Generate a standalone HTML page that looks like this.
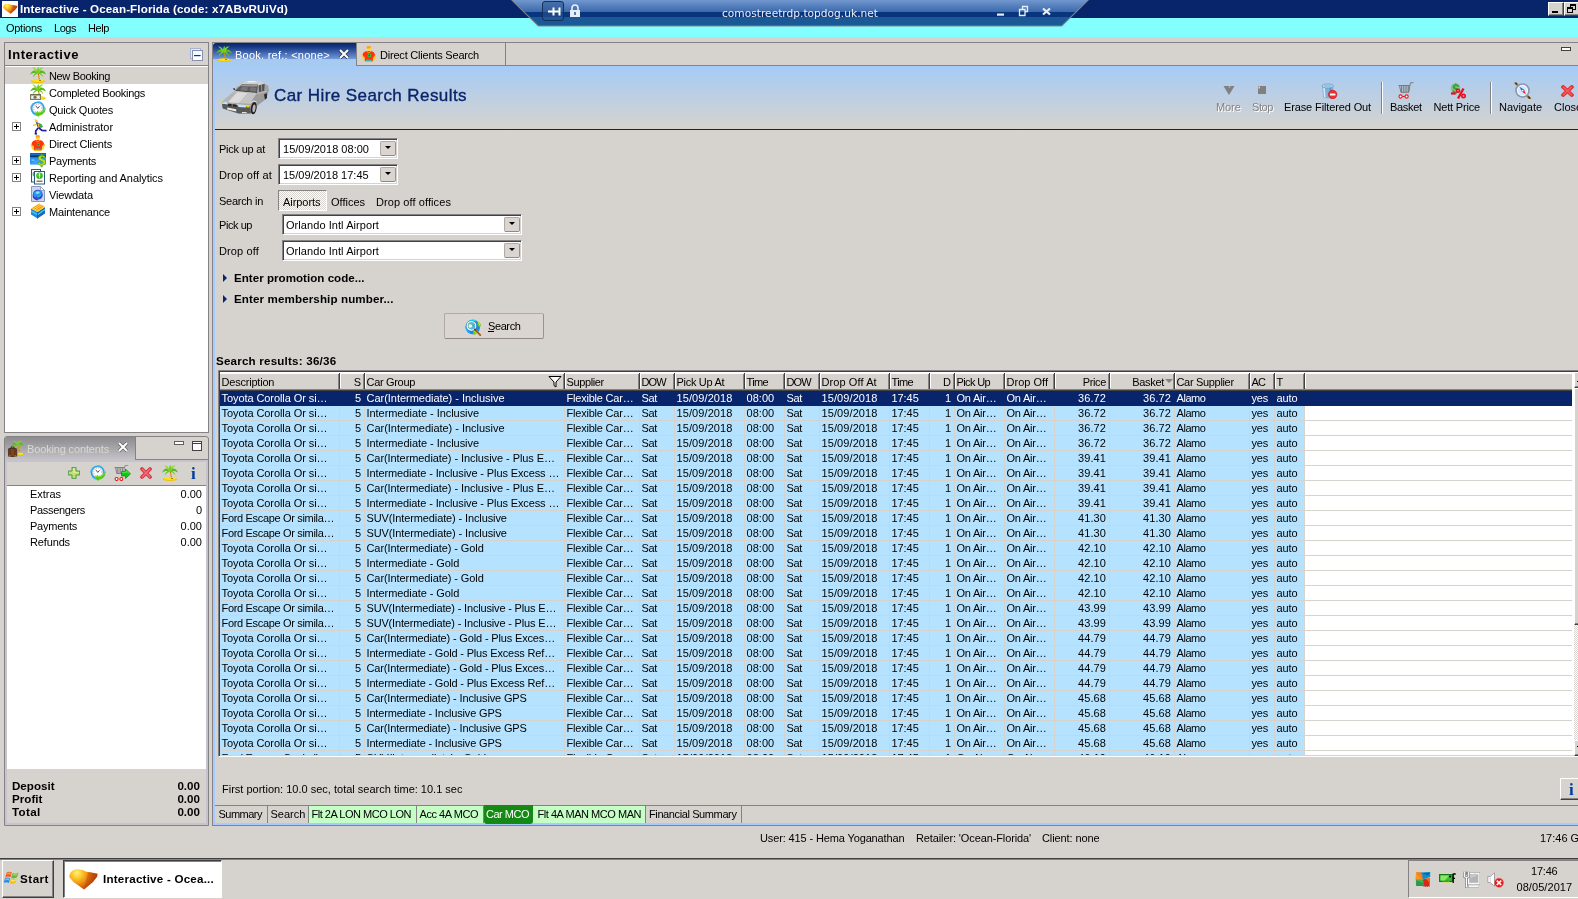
<!DOCTYPE html><html><head><meta charset="utf-8"><title>Interactive - Ocean-Florida</title><style>
html,body{margin:0;padding:0}
body{width:1578px;height:899px;overflow:hidden;background:#d6d3ce;position:relative;font:11px/13px "Liberation Sans",sans-serif;color:#000}
div,span.t,.ic{position:absolute;box-sizing:border-box}
span.t{white-space:nowrap;line-height:13px;height:13px}
.b{font-weight:bold;font-size:11.6px;margin-top:-1px}
.flat{background:#dad5d0;border:1px solid;border-color:#b0aaa2 #9a948c #908a82 #b0aaa2;border-radius:2px}
.w{color:#fff}
.sunk{border:1px solid;border-color:#848284 #fff #fff #848284;box-shadow:inset 1px 1px 0 #424142,inset -1px -1px 0 #d6d3ce;background:#fff}
.rais{border:1px solid;border-color:#fff #424142 #424142 #fff;box-shadow:inset -1px -1px 0 #848284;background:#d6d3ce}
.rais2{border:1px solid;border-color:#fff #424142 #424142 #fff;box-shadow:inset -1px -1px 0 #848284;background:#d6d3ce}
.ic svg{display:block}
.hd{background:#d6d3ce;border-right:1px solid #424142;height:19px;top:372px}
</style></head><body><div id="root" style="left:0;top:0;width:1578px;height:899px;will-change:transform">
<div class="" style="left:0px;top:0px;width:1578px;height:18px;background:#08246b"></div>
<div class="ic" style="left:2px;top:1px"><svg width="16" height="16" viewBox="0 0 16 16"><rect width="16" height="16" fill="#fff"/><g transform="translate(1,2.500) scale(.5)"><defs><radialGradient id="ga" gradientUnits="userSpaceOnUse" cx="8" cy="4" r="20"><stop offset="0" stop-color="#fff080"/><stop offset=".22" stop-color="#ffd030"/><stop offset=".5" stop-color="#f09818"/><stop offset=".78" stop-color="#d05c0c"/><stop offset="1" stop-color="#b84008"/></radialGradient></defs><path d="M.3 8C.5 4 3 .5 8 .3c4-.1 7 1.200 9 2.500l3.500.3 8 1.700-.3 2.700L24 13l-9 7.500L4.500 13z" fill="url(#ga)"/><path d="M19 3.500l9.500 1.300-.3 2.700L24 13l-9 7.500z" fill="#b03c04" fill-opacity=".35"/></g></svg></div>
<span class="t b w" style="top:3px;left:20px;letter-spacing:0.126px;">Interactive - Ocean-Florida (code: x7ABvRUiVd)</span>
<div class="rais2" style="left:1548px;top:2px;width:16px;height:14px;"><div style="left:3px;top:8px;width:6px;height:2px;background:#000"></div></div>
<div class="rais2" style="left:1564px;top:2px;width:16px;height:14px;"><div style="left:5px;top:1px;width:6px;height:6px;border:1px solid #000;border-top-width:2px"></div><div style="left:2px;top:4px;width:6px;height:6px;border:1px solid #000;border-top-width:2px;background:#d6d3ce"></div></div>
<div class="" style="left:0px;top:18px;width:1578px;height:19px;background:#84ffff"></div>
<span class="t " style="top:22px;left:6px;letter-spacing:-0.275px;">Options</span>
<span class="t " style="top:22px;left:54px;letter-spacing:-0.465px;">Logs</span>
<span class="t " style="top:22px;left:88px;letter-spacing:-0.406px;">Help</span>
<svg style="position:absolute;left:505px;top:0" width="590" height="28" viewBox="505 0 590 28">
<defs><linearGradient id="rg" x1="0" y1="0" x2="0" y2="1">
<stop offset="0" stop-color="#7297cf"/><stop offset="0.465" stop-color="#3a69aa"/><stop offset="0.475" stop-color="#08357e"/><stop offset="0.655" stop-color="#08357e"/><stop offset="0.67" stop-color="#1b5896"/><stop offset="1" stop-color="#1b5896"/></linearGradient></defs>
<polygon points="511,0 1089,0 1062,26.5 538,26.5" fill="#7d8790"/>
<polygon points="512.5,0 1087.5,0 1061.5,25.5 538.5,25.5" fill="url(#rg)"/>
<rect x="542.5" y="1.5" width="21" height="19" rx="2.5" fill="#2c5690" fill-opacity=".55" stroke="#14305c"/>
<path d="M548 11.5h5M553.5 7.5v8M559.5 7.5v8M553.5 11.5h6" stroke="#fff" stroke-width="2" fill="none"/>
<rect x="570" y="10" width="10" height="7" fill="#e8eef8"/><path d="M572 10v-2a3 3 0 0 1 6 0v2" stroke="#e8eef8" stroke-width="1.6" fill="none"/><rect x="574.3" y="12" width="1.4" height="3" fill="#1a4a8a"/>
<rect x="997" y="13.5" width="7" height="2.2" fill="#e8eef8"/>
<path d="M1022.5 9.5v-3h5v5h-2.5M1019.5 9.5h5.5v6h-5.5z" stroke="#e8eef8" stroke-width="1.3" fill="none"/>
<path d="M1043 8.5l7 6M1050 8.5l-7 6" stroke="#e8eef8" stroke-width="2.2" fill="none"/>
<text x="722" y="17" font-family="'DejaVu Sans','Liberation Sans',sans-serif" font-size="11" fill="#e8eef8" textLength="156" lengthAdjust="spacingAndGlyphs">comostreetrdp.topdog.uk.net</text>
</svg>
<div class="" style="left:4px;top:42px;width:205px;height:391px;border:1px solid #848284;background:#fff"></div>
<div class="" style="left:5px;top:43px;width:203px;height:22px;background:#d6d3ce"></div>
<div class="" style="left:5px;top:65px;width:203px;height:1px;background:#848284"></div>
<span class="t b" style="top:49px;left:8px;letter-spacing:0.541px;font-size:13px;line-height:15px;height:15px;margin-top:-2px">Interactive</span>
<div class="ic" style="left:190px;top:48px"><svg width="14" height="14" viewBox="0 0 14 14"><rect x=".5" y=".5" width="10" height="10" fill="#d8f0ff" stroke="#a8b4d4"/><rect x="2.500" y="2.500" width="10" height="10" fill="#f0fbff" stroke="#8890b0"/><rect x="3.500" y="8" width="8" height="4" fill="#fff"/><rect x="4" y="7" width="6.600" height="1.200" fill="#004080"/></svg></div>
<div class="" style="left:5px;top:67px;width:203px;height:17px;background:#d6d3ce"></div>
<div class="ic" style="left:30px;top:67px"><svg width="16" height="16" viewBox="0 0 16 16"><ellipse cx="8" cy="14.300" rx="7" ry="1.700" fill="#f0c000"/><ellipse cx="8" cy="13.700" rx="6" ry="1.300" fill="#ffe414"/><path d="M7 5.500C8.300 8 9 10.500 8.800 13.600L10 13.800 9.700 13c.2-2.800-.5-5.500-1.500-7.800z" fill="#f5b400"/><path d="M7.800 7l1 .8M8.300 9l1 .6M8.600 11l1 .5M9.200 13.500l1.800.2" stroke="#b05a14" stroke-width=".9"/><path d="M7.500 5C5.500 2.300 1.800 3 0 7.800 1.800 6.200 4.200 5.600 7.200 6.300z" fill="#58b81c"/><path d="M7.300 5.400C5.200 5.400 3 7.400 2.800 10.600 4 8.600 5.800 7.200 8 6.800z" fill="#6cc822"/><path d="M8 5C10.200 2.200 14.500 3 16 7.600 14 6 11.500 5.500 8.300 6.200z" fill="#58b81c"/><path d="M8.300 5.400C10.800 5.400 13 7.400 13.400 10.600 12.200 8.600 10.500 7.300 8 6.800z" fill="#6cc822"/><path d="M7.600 5.200C6.800 2.600 4.800.6 2 .6 4 1.800 5.300 3.300 5.800 5.400z" fill="#86d82c"/><path d="M7.800 5.200C8.400 2.400 10.600.2 13.600.6 11.400 1.800 10 3.400 9.500 5.400z" fill="#86d82c"/><path d="M6.500 5.200C7 2.500 7.500 1 8.500 0 9 1.500 9.200 3.500 8.800 5.400z" fill="#72cc24"/></svg></div>
<span class="t " style="top:70px;left:49px;letter-spacing:-0.348px;">New Booking</span>
<div class="ic" style="left:30px;top:84px"><svg width="16" height="16" viewBox="0 0 16 16"><ellipse cx="11.500" cy="14" rx="4.200" ry="1.600" fill="#f0c000"/><ellipse cx="11.500" cy="13.500" rx="3.500" ry="1.100" fill="#ffe414"/><path d="M7 5.500C8.300 8 9 10.500 8.800 11.500L10 11.500 9.700 11c.2-2.800-.5-5.500-1.500-7.800z" fill="#f5b400"/><path d="M7.800 7l1 .8M8.300 9l1 .6M8.600 11l1 .5M9.200 13.500l1.800.2" stroke="#b05a14" stroke-width=".9"/><path d="M7.500 5C5.500 2.300 1.800 3 0 7.800 1.800 6.200 4.200 5.600 7.200 6.300z" fill="#58b81c"/><path d="M7.300 5.400C5.200 5.400 3 7.400 2.800 10.600 4 8.600 5.800 7.200 8 6.800z" fill="#6cc822"/><path d="M8 5C10.200 2.200 14.500 3 16 7.600 14 6 11.500 5.500 8.300 6.200z" fill="#58b81c"/><path d="M8.300 5.400C10.800 5.400 13 7.400 13.400 10.600 12.200 8.600 10.500 7.300 8 6.800z" fill="#6cc822"/><path d="M7.600 5.200C6.800 2.600 4.800.6 2 .6 4 1.800 5.300 3.300 5.800 5.400z" fill="#86d82c"/><path d="M7.800 5.200C8.400 2.400 10.600.2 13.600.6 11.400 1.800 10 3.400 9.500 5.400z" fill="#86d82c"/><path d="M6.500 5.200C7 2.500 7.500 1 8.500 0 9 1.500 9.200 3.500 8.800 5.400z" fill="#72cc24"/><rect x=".5" y="10.500" width="10" height="5" fill="#d8dcc4" stroke="#787c5c" stroke-width="1"/><rect x="1" y="10.200" width="10" height="1.200" fill="#686c50"/><circle cx="5" cy="13.200" r="1.500" fill="#70705c"/><rect x="1.800" y="12.300" width="1.300" height="1.600" fill="#fff"/><rect x="7.200" y="12.300" width="1.600" height="1.600" fill="#fff"/></svg></div>
<span class="t " style="top:87px;left:49px;letter-spacing:-0.306px;">Completed Bookings</span>
<div class="ic" style="left:30px;top:101px"><svg width="16" height="16" viewBox="0 0 16 16"><circle cx="7.700" cy="7.500" r="7" fill="#18a0f8"/><circle cx="7.700" cy="7.500" r="7" fill="none" stroke="#38c8ff" stroke-width="1" stroke-dasharray="6 5"/><circle cx="7.700" cy="7.300" r="5.200" fill="#fff"/><circle cx="7.700" cy="7.300" r="5.200" fill="none" stroke="#c8c0c0" stroke-width=".7"/><circle cx="7.700" cy="7.300" r="4" fill="none" stroke="#a09090" stroke-width=".9" stroke-dasharray=".7 1.390"/><path d="M5.800 4.800l2 2.600 1.800-2.200" stroke="#484040" stroke-width=".9" fill="none"/><path d="M4.800 12l3.200-2.200 0 1.400c3.500 0 6-1.600 7.400-5.200.8 4.200-2 8-6 8.600l-1.200 1.400z" fill="#58c81c"/><path d="M5 12.200l3-1.600v1c2.500 0 5-1 6.600-3.600" stroke="#8ce838" stroke-width=".8" fill="none"/></svg></div>
<span class="t " style="top:104px;left:49px;letter-spacing:-0.220px;">Quick Quotes</span>
<div class="ic" style="left:32px;top:119px"><svg width="16" height="16" viewBox="0 0 16 16"><path d="M2.500 0l2.200.8 1.400 1.600-1 1.400-1.800-.6z" fill="#f8c838"/><path d="M4 3l3 1 2 3.800-2.600 1.600L4.600 6z" fill="#3848a8"/><path d="M6.500 4l3 1 1 3-2 1.400z" fill="#48a848"/><path d="M6 4.500l1.200 4" stroke="#f0c030" stroke-width="1.200"/><path d="M4.500 5.500L1 6.300" stroke="#f8c838" stroke-width="1.300"/><path d="M9 6l1.600 1.800" stroke="#48a848" stroke-width="1.200"/><path d="M6.800 8.800l3.200 2.600 4.500.2" stroke="#1c1c9c" stroke-width="1.700" fill="none"/><path d="M6.200 9l-2.400 2.800-.2 3" stroke="#1c1c9c" stroke-width="1.700" fill="none"/><rect x="2.800" y="14" width="2.200" height="1.600" fill="#1c1c9c"/></svg></div>
<span class="t " style="top:121px;left:49px;letter-spacing:-0.061px;">Administrator</span>
<div class="" style="left:12px;top:122px;width:9px;height:9px;border:1px solid #848284;background:#fff"><div style="left:1px;top:3px;width:5px;height:1px;background:#000"></div><div style="left:3px;top:1px;width:1px;height:5px;background:#000"></div></div>
<div class="ic" style="left:30px;top:135px"><svg width="16" height="17" viewBox="0 0 16 17"><path d="M5.500 1.200c.8-1.400 3.600-1.400 4.600-.2l-.6 1.200h-3.400z" fill="#f8a818"/><ellipse cx="7.800" cy="3" rx="2.300" ry="2.100" fill="#ffd838"/><path d="M6 1.800h3.600" stroke="#f09010" stroke-width=".9"/><path d="M2 7.500C3 5.500 5 5 7.800 5s4.800.5 5.800 2.500l1 3-1.800 1.200-.6-1.400-.4 5H3.800l-.4-5-.6 1.400L1 10.500z" fill="#ff3408"/><path d="M5.500 5.200l2.300 1.600 2.300-1.600" stroke="#ffb020" stroke-width=".9" fill="none"/><rect x="6.800" y="8" width="3" height="3" fill="#38c048"/><rect x="7.600" y="8.800" width="1.400" height="1.400" fill="#187828"/><path d="M1.400 10l1.600 3.600M14.200 10l-1.600 3.600" stroke="#ffd020" stroke-width="1.700" stroke-linecap="round"/><rect x="5" y="13.500" width="5.600" height="1.700" fill="#20b8c8"/><path d="M4.200 15.500h7.200" stroke="#f8b020" stroke-width="1.200"/></svg></div>
<span class="t " style="top:138px;left:49px;letter-spacing:-0.172px;">Direct Clients</span>
<div class="ic" style="left:30px;top:153px"><svg width="16" height="17" viewBox="0 0 16 17"><rect x="0" y="0" width="16" height="11.500" rx="1" fill="#2890f0"/><rect x="0" y="0" width="16" height="1.600" fill="#1060b0"/><rect x="0" y="2.200" width="16" height="2" fill="#083868"/><path d="M0 11l10-6.500h6v7H0z" fill="#48b0ff" fill-opacity=".55"/><rect x="1.500" y="6.500" width="3" height="1.200" fill="#88d0ff"/><path d="M11.500 2.300c2.500-.3 3.800.7 4 2.200l-1.800.4c-.3-.8-1-1.200-2-1-1 .3-1 1.200 0 1.600 2 .8 4.200 1.200 4 3.800-.2 1.800-1.600 2.800-3.400 3v1.600h-1.300v-1.600c-2-.2-3.200-1.200-3.500-3l1.800-.3c.3 1 1 1.600 2.300 1.500 1.300-.1 1.800-1.200.8-1.900-1.800-1-4.200-1-4.200-3.500 0-1.500 1.200-2.500 2.800-2.800V1h1.300v1.300z" fill="#b8e020" stroke="#389010" stroke-width=".6"/></svg></div>
<span class="t " style="top:155px;left:49px;letter-spacing:-0.240px;">Payments</span>
<div class="" style="left:12px;top:156px;width:9px;height:9px;border:1px solid #848284;background:#fff"><div style="left:1px;top:3px;width:5px;height:1px;background:#000"></div><div style="left:3px;top:1px;width:1px;height:5px;background:#000"></div></div>
<div class="ic" style="left:30px;top:169px"><svg width="16" height="16" viewBox="0 0 16 16"><rect x="1.500" y=".5" width="9" height="12.500" fill="#f4f8fc" stroke="#2a5a7a"/><circle cx="5" cy="5" r="2.500" fill="#48c038"/><rect x="4.500" y="2.500" width="10" height="12.500" fill="#fff" stroke="#2a5a7a"/><circle cx="9.500" cy="6.800" r="3.300" fill="#30b820"/><circle cx="9" cy="6" r="2" fill="#68e048" fill-opacity=".6"/><rect x="9" y="4.400" width="1.100" height="3.200" fill="#fff"/><rect x="9" y="8.200" width="1.100" height="1" fill="#fff"/><path d="M6.500 12.200h6" stroke="#803828" stroke-width="1.100"/></svg></div>
<span class="t " style="top:172px;left:49px;letter-spacing:-0.069px;">Reporting and Analytics</span>
<div class="" style="left:12px;top:173px;width:9px;height:9px;border:1px solid #848284;background:#fff"><div style="left:1px;top:3px;width:5px;height:1px;background:#000"></div><div style="left:3px;top:1px;width:1px;height:5px;background:#000"></div></div>
<div class="ic" style="left:30px;top:186px"><svg width="16" height="16" viewBox="0 0 16 16"><path d="M1.500.5h9l4 4v11h-13z" fill="#ccd6ec" stroke="#8898b8"/><path d="M10.500.5v4h4z" fill="#fff" stroke="#8898b8" stroke-width=".8"/><circle cx="7.800" cy="8.800" r="5" fill="#3848d8"/><path d="M4 6.500c1.500-2 5-2.800 7-1 1.500 1.500 1 3.500-.5 4.500S7.500 9 6.500 10.500s-3 .5-3-1.500.0-1.800.5-2.500z" fill="#2098f0"/><path d="M6 6c1-1 3-1 3.500 0s-.5 2-2 2-2.500-1-1.500-2z" fill="#88e0ff"/><path d="M7 11c1.500-.5 3-.5 4-2" stroke="#30d0c0" stroke-width="1" fill="none"/><path d="M3.200 9.500c0 2.500 2 4.300 4.600 4.300" stroke="#5828a8" stroke-width="1.200" fill="none"/></svg></div>
<span class="t " style="top:189px;left:49px;letter-spacing:-0.133px;">Viewdata</span>
<div class="ic" style="left:30px;top:203px"><svg width="16" height="16" viewBox="0 0 16 16"><path d="M1 5.500l6.500 3.500v6.500L1 11.500z" fill="#2088e0"/><path d="M7.500 9L15 4v6.500l-7.500 5z" fill="#1868b8"/><path d="M1 5.500L8.500.8 15 4 7.500 9z" fill="#ffc818"/><path d="M2.800 5.200l7-4.200M4.500 6.100l7-4.300M6.200 7l7-4.400" stroke="#f08010" stroke-width=".9"/><path d="M2 4.900l7-4.300M3.600 5.700l7-4.300M5.300 6.600l7-4.400" stroke="#fff0a0" stroke-width=".5"/><path d="M1 8l6.500 3.500L15 6.500" stroke="#48d0f8" stroke-width="1.100" fill="none"/><path d="M7.500 9v6.500" stroke="#0c4890" stroke-width=".7"/></svg></div>
<span class="t " style="top:206px;left:49px;letter-spacing:-0.182px;">Maintenance</span>
<div class="" style="left:12px;top:207px;width:9px;height:9px;border:1px solid #848284;background:#fff"><div style="left:1px;top:3px;width:5px;height:1px;background:#000"></div><div style="left:3px;top:1px;width:1px;height:5px;background:#000"></div></div>
<div class="" style="left:4px;top:436px;width:205px;height:390px;border:1px solid #848284;border-radius:3px 3px 0 0"></div>
<div class="" style="left:5px;top:437px;width:131px;height:23px;background:linear-gradient(#8c8c90,#a4a4a8 45%,#c6c4c8);border-right:1px solid #848284;border-radius:2px 0 0 0"></div>
<div class="" style="left:136px;top:459px;width:72px;height:1px;background:#848284"></div>
<div class="" style="left:5px;top:460px;width:203px;height:2px;background:#c6c3ce"></div>
<div class="" style="left:5px;top:460px;width:2px;height:365px;background:#c6c3ce"></div>
<div class="" style="left:206px;top:460px;width:2px;height:365px;background:#c6c3ce"></div>
<div class="" style="left:5px;top:823px;width:203px;height:2px;background:#c6c3ce"></div>
<div class="ic" style="left:8px;top:440px"><svg width="16" height="17" viewBox="0 0 16 17"><g transform="translate(3.500,0) scale(.78)"><path d="M7 5.500C8.300 8 9 10.500 8.800 13.600L10 13.800 9.700 13c.2-2.800-.5-5.500-1.500-7.800z" fill="#f5b400"/><path d="M7.800 7l1 .8M8.300 9l1 .6M8.600 11l1 .5M9.200 13.500l1.800.2" stroke="#b05a14" stroke-width=".9"/><path d="M7.500 5C5.500 2.300 1.800 3 0 7.800 1.800 6.200 4.200 5.600 7.200 6.300z" fill="#58b81c"/><path d="M7.300 5.400C5.200 5.400 3 7.400 2.800 10.600 4 8.600 5.800 7.200 8 6.800z" fill="#6cc822"/><path d="M8 5C10.200 2.200 14.500 3 16 7.600 14 6 11.500 5.500 8.300 6.200z" fill="#58b81c"/><path d="M8.300 5.400C10.800 5.400 13 7.400 13.400 10.600 12.200 8.600 10.500 7.300 8 6.800z" fill="#6cc822"/><path d="M7.600 5.200C6.800 2.600 4.800.6 2 .6 4 1.800 5.300 3.300 5.800 5.400z" fill="#86d82c"/><path d="M7.800 5.200C8.400 2.400 10.600.2 13.600.6 11.400 1.800 10 3.400 9.500 5.400z" fill="#86d82c"/><path d="M6.500 5.200C7 2.500 7.500 1 8.500 0 9 1.500 9.200 3.500 8.800 5.400z" fill="#72cc24"/></g><ellipse cx="12.500" cy="14.300" rx="3.400" ry="1.500" fill="#f0c000"/><ellipse cx="12.500" cy="13.800" rx="2.800" ry="1" fill="#ffe414"/><rect x=".3" y="8.500" width="8.400" height="8" rx="1" fill="#7a4424"/><rect x=".3" y="8.500" width="8.400" height="8" rx="1" fill="none" stroke="#3c1c08" stroke-width=".7"/><path d="M3 8.500V7h3v1.500" stroke="#3c1c08" stroke-width=".9" fill="none"/><path d="M2 9v7M7 9v7" stroke="#4c2810" stroke-width=".8"/><rect x="1.200" y="15.500" width="1.200" height="1" fill="#f0c000"/><rect x="6.600" y="15.500" width="1.200" height="1" fill="#f0c000"/></svg></div>
<span class="t " style="top:443px;left:27px;letter-spacing:-0.149px;color:#dcd8d2">Booking contents</span>
<svg style="position:absolute;left:117px;top:441px" width="12" height="12"><path d="M2 2l8 8M10 2l-8 8" stroke="#606060" stroke-width="3.4"/><path d="M2 2l8 8M10 2l-8 8" stroke="#fff" stroke-width="2"/></svg>
<div class="" style="left:174px;top:441px;width:10px;height:4px;border:1px solid #606060;background:#fff"></div>
<div class="" style="left:192px;top:441px;width:10px;height:10px;border:1px solid #424142;background:#fff"><div style="left:0;top:1px;width:8px;height:1px;background:#424142"></div></div>
<div class="" style="left:7px;top:485px;width:199px;height:1px;background:#848284"></div>
<div class="ic" style="left:68px;top:467px"><svg width="12" height="12" viewBox="0 0 12 12"><path d="M4 .3h4v3.700h3.700v4H8v3.700H4V8H.3V4H4z" fill="#c4dc70" stroke="#3c9048" stroke-width=".9"/><path d="M5 1.300h2v3.700h3.700v1H5z" fill="#e0f098" fill-opacity=".8"/></svg></div>
<div class="ic" style="left:90px;top:465px"><svg width="16" height="16" viewBox="0 0 16 16"><circle cx="7.700" cy="7.500" r="7" fill="#18a0f8"/><circle cx="7.700" cy="7.500" r="7" fill="none" stroke="#38c8ff" stroke-width="1" stroke-dasharray="6 5"/><circle cx="7.700" cy="7.300" r="5.200" fill="#fff"/><circle cx="7.700" cy="7.300" r="5.200" fill="none" stroke="#c8c0c0" stroke-width=".7"/><circle cx="7.700" cy="7.300" r="4" fill="none" stroke="#a09090" stroke-width=".9" stroke-dasharray=".7 1.390"/><path d="M5.800 4.800l2 2.600 1.800-2.200" stroke="#484040" stroke-width=".9" fill="none"/><path d="M4.800 12l3.200-2.200 0 1.400c3.500 0 6-1.600 7.400-5.200.8 4.200-2 8-6 8.600l-1.200 1.400z" fill="#58c81c"/><path d="M5 12.200l3-1.600v1c2.500 0 5-1 6.600-3.600" stroke="#8ce838" stroke-width=".8" fill="none"/></svg></div>
<div class="ic" style="left:114px;top:465px"><svg width="17" height="16" viewBox="0 0 17 16"><path d="M.5 2.500h10.500M1.500 2.500l1.300 6h7.200M3.300 2.500v6M5 2.500v6M6.700 2.500v6M8.400 2.500v6M10 2.500v6M10.500 2.500l.9-2.200h2.800" stroke="#7c7c80" stroke-width=".9" fill="none"/><circle cx="2.600" cy="14" r="1.500" fill="#fff" stroke="#e81818" stroke-width="1.100"/><circle cx="7.400" cy="14" r="1.500" fill="#fff" stroke="#e81818" stroke-width="1.100"/><path d="M7.500 6.500h4V4l5 4.800-5 4.700V11h-4z" fill="#10c818" stroke="#0c8010" stroke-width=".7"/><path d="M8.200 7.300h4.200V6l3 2.800" stroke="#68f060" stroke-width=".8" fill="none"/></svg></div>
<div class="ic" style="left:140px;top:467px"><svg width="12" height="12" viewBox="0 0 12 12"><path d="M2 2l8 8M10 2l-8 8" stroke="#d83040" stroke-width="3.700" stroke-linecap="round"/><path d="M2.200 2.200l7.600 7.600M9.800 2.200l-7.600 7.600" stroke="#f06874" stroke-width="1.700" stroke-linecap="round"/></svg></div>
<div class="ic" style="left:162px;top:465px"><svg width="16" height="16" viewBox="0 0 16 16"><ellipse cx="8" cy="14.300" rx="7" ry="1.700" fill="#f0c000"/><ellipse cx="8" cy="13.700" rx="6" ry="1.300" fill="#ffe414"/><path d="M7 5.500C8.300 8 9 10.500 8.800 13.600L10 13.800 9.700 13c.2-2.800-.5-5.500-1.500-7.800z" fill="#f5b400"/><path d="M7.800 7l1 .8M8.300 9l1 .6M8.600 11l1 .5M9.200 13.500l1.800.2" stroke="#b05a14" stroke-width=".9"/><path d="M7.500 5C5.500 2.300 1.800 3 0 7.800 1.800 6.200 4.200 5.600 7.200 6.300z" fill="#58b81c"/><path d="M7.300 5.400C5.200 5.400 3 7.400 2.800 10.600 4 8.600 5.800 7.200 8 6.800z" fill="#6cc822"/><path d="M8 5C10.200 2.200 14.500 3 16 7.600 14 6 11.500 5.500 8.300 6.200z" fill="#58b81c"/><path d="M8.300 5.400C10.800 5.400 13 7.400 13.400 10.600 12.200 8.600 10.500 7.300 8 6.800z" fill="#6cc822"/><path d="M7.600 5.200C6.800 2.600 4.800.6 2 .6 4 1.800 5.300 3.300 5.800 5.400z" fill="#86d82c"/><path d="M7.800 5.200C8.400 2.400 10.600.2 13.600.6 11.400 1.800 10 3.400 9.500 5.400z" fill="#86d82c"/><path d="M6.500 5.200C7 2.500 7.500 1 8.500 0 9 1.500 9.200 3.500 8.800 5.400z" fill="#72cc24"/></svg></div>
<span class="t " style="top:469px;left:191px;font:bold 17px/17px Liberation Serif,serif;height:17px;color:#003c9c;margin-top:-4px">i</span>
<div class="" style="left:7px;top:486px;width:199px;height:283px;background:#fff"></div>
<span class="t " style="top:488px;left:30px;letter-spacing:-0.031px;">Extras</span>
<span class="t " style="top:488px;left:-98px;width:300px;text-align:right;">0.00</span>
<span class="t " style="top:504px;left:30px;letter-spacing:-0.309px;">Passengers</span>
<span class="t " style="top:504px;left:-98px;width:300px;text-align:right;">0</span>
<span class="t " style="top:520px;left:30px;letter-spacing:-0.240px;">Payments</span>
<span class="t " style="top:520px;left:-98px;width:300px;text-align:right;">0.00</span>
<span class="t " style="top:536px;left:30px;letter-spacing:-0.141px;">Refunds</span>
<span class="t " style="top:536px;left:-98px;width:300px;text-align:right;">0.00</span>
<span class="t b" style="top:780px;left:12px;letter-spacing:-0.002px;">Deposit</span>
<span class="t b" style="top:780px;left:-100px;width:300px;text-align:right;">0.00</span>
<span class="t b" style="top:793px;left:12px;letter-spacing:0.036px;">Profit</span>
<span class="t b" style="top:793px;left:-100px;width:300px;text-align:right;">0.00</span>
<span class="t b" style="top:806px;left:12px;letter-spacing:0.331px;">Total</span>
<span class="t b" style="top:806px;left:-100px;width:300px;text-align:right;">0.00</span>
<div class="" style="left:212px;top:42px;width:1370px;height:784px;border:1px solid #848284;border-right:0"></div>
<div class="" style="left:213px;top:43px;width:144px;height:23px;background:linear-gradient(#08246b 0,#173a86 18%,#6f97d8 68%,#a6caf0 72%);border-right:1px solid #848284;border-radius:3px 0 0 0"></div>
<div class="ic" style="left:216px;top:46px"><svg width="16" height="16" viewBox="0 0 16 16"><ellipse cx="8" cy="14.300" rx="7" ry="1.700" fill="#f0c000"/><ellipse cx="8" cy="13.700" rx="6" ry="1.300" fill="#ffe414"/><path d="M7 5.500C8.300 8 9 10.500 8.800 13.600L10 13.800 9.700 13c.2-2.800-.5-5.500-1.500-7.800z" fill="#f5b400"/><path d="M7.800 7l1 .8M8.300 9l1 .6M8.600 11l1 .5M9.200 13.500l1.800.2" stroke="#b05a14" stroke-width=".9"/><path d="M7.500 5C5.500 2.300 1.800 3 0 7.800 1.800 6.200 4.200 5.600 7.200 6.300z" fill="#58b81c"/><path d="M7.300 5.400C5.200 5.400 3 7.400 2.800 10.600 4 8.600 5.800 7.200 8 6.800z" fill="#6cc822"/><path d="M8 5C10.200 2.200 14.500 3 16 7.600 14 6 11.500 5.500 8.300 6.200z" fill="#58b81c"/><path d="M8.300 5.400C10.800 5.400 13 7.400 13.400 10.600 12.200 8.600 10.500 7.300 8 6.800z" fill="#6cc822"/><path d="M7.600 5.200C6.800 2.600 4.800.6 2 .6 4 1.800 5.300 3.300 5.800 5.400z" fill="#86d82c"/><path d="M7.800 5.200C8.400 2.400 10.600.2 13.600.6 11.400 1.800 10 3.400 9.500 5.400z" fill="#86d82c"/><path d="M6.500 5.200C7 2.500 7.500 1 8.500 0 9 1.500 9.200 3.500 8.800 5.400z" fill="#72cc24"/></svg></div>
<span class="t w" style="top:49px;left:235px;letter-spacing:0.249px;">Book. ref.: &lt;none&gt;</span>
<svg style="position:absolute;left:338px;top:48px" width="12" height="12"><path d="M2 2l8 8M10 2l-8 8" stroke="#303840" stroke-width="3.6"/><path d="M2 2l8 8M10 2l-8 8" stroke="#fff" stroke-width="2"/></svg>
<div class="ic" style="left:361px;top:46px"><svg width="16" height="17" viewBox="0 0 16 17"><path d="M5.500 1.200c.8-1.400 3.600-1.400 4.600-.2l-.6 1.200h-3.400z" fill="#f8a818"/><ellipse cx="7.800" cy="3" rx="2.300" ry="2.100" fill="#ffd838"/><path d="M6 1.800h3.600" stroke="#f09010" stroke-width=".9"/><path d="M2 7.500C3 5.500 5 5 7.800 5s4.800.5 5.800 2.500l1 3-1.800 1.200-.6-1.400-.4 5H3.800l-.4-5-.6 1.400L1 10.500z" fill="#ff3408"/><path d="M5.500 5.200l2.300 1.600 2.300-1.600" stroke="#ffb020" stroke-width=".9" fill="none"/><rect x="6.800" y="8" width="3" height="3" fill="#38c048"/><rect x="7.600" y="8.800" width="1.400" height="1.400" fill="#187828"/><path d="M1.400 10l1.600 3.600M14.200 10l-1.600 3.600" stroke="#ffd020" stroke-width="1.700" stroke-linecap="round"/><rect x="5" y="13.500" width="5.600" height="1.700" fill="#20b8c8"/><path d="M4.200 15.500h7.200" stroke="#f8b020" stroke-width="1.200"/></svg></div>
<span class="t " style="top:49px;left:380px;letter-spacing:-0.206px;">Direct Clients Search</span>
<div class="" style="left:505px;top:43px;width:1px;height:22px;background:#848284"></div>
<div class="" style="left:357px;top:65px;width:1225px;height:1px;background:#848284"></div>
<div class="" style="left:1561px;top:47px;width:10px;height:4px;border:1px solid #424142;background:#fff"></div>
<div class="" style="left:213px;top:66px;width:2px;height:759px;background:#a5cbff"></div>
<div class="" style="left:213px;top:823px;width:1370px;height:2px;background:#a5cbff"></div>
<div class="" style="left:215px;top:66px;width:1365px;height:63px;background:linear-gradient(#a5cbf7,#d6d3ce)"></div>
<div class="" style="left:215px;top:129px;width:1365px;height:1px;background:#08246b"></div>
<div class="ic" style="left:221px;top:80px"><svg width="48" height="35" viewBox="0 0 48 35"><path d="M.8 23.300l1-2.600L13.600 11l2.500-4.600L23.300 1H41.200l3 3.300 3.100 1.100.5 4.100-2.500 9.200L36 25.800l-6.100 7.700H17.600L1.800 28.400z" fill="#a4a4a4"/><path d="M16.100 6.400L23.300 1H41.200l3 3.300L37 5.900z" fill="#d0d0d0"/><path d="M27 1h8l-1 1.200h-8z" fill="#f0f0f0"/><path d="M14.600 10.500l6.100-6.300 16.400.3L36 12.500z" fill="#5c5c5c"/><path d="M20.500 4.800l16 .3-.2 1.500-17-.4z" fill="#9a9a9a"/><path d="M21.500 7l5.500.2-1 4-7.500-.6z" fill="#787878"/><path d="M29.500 7.300l5.800.2-.5 4.400-6.300-.5z" fill="#747474"/><path d="M14.600 10.500l21.400 2" stroke="#3c3c3c" stroke-width=".8"/><path d="M37.600 5.400l6.100-1.600-.5 7.200-5.100 1z" fill="#505050"/><path d="M40.500 4.600l.3 7" stroke="#a8a8a8" stroke-width=".8"/><path d="M1.800 20.700L13.600 11 36 13l-7.100 10.800-21.500-1z" fill="#c4c4c4"/><path d="M7.500 22l9-9.800 8 .6-9 10z" fill="#dcdcdc"/><path d="M16.500 23l9-10" stroke="#f4f4f4" stroke-width=".9"/><path d="M2.500 20.500l10-8.500 3 .2-8.500 9.500z" fill="#b4b4b4"/><path d="M36 13l8.200-2 3.600-1.500-2.500 9.200L36 25.800l-7.100-2z" fill="#9c9c9c"/><path d="M36.500 14l9.500-3" stroke="#c8c8c8" stroke-width=".8"/><path d="M.8 23.300l28.100 2.500 1 7.700H17.600L1.800 28.400z" fill="#585858"/><path d="M1 23.300l28 2.600" stroke="#e8e8e8" stroke-width=".9"/><path d="M6.900 23.500l8.700 1 .2 2.600-8.600-1z" fill="#282828"/><path d="M11.200 24v2.600" stroke="#a0a0a0" stroke-width=".8"/><path d="M2.300 21.700l3.600.6.500 2-3.800-.6z" fill="#b8e4ff"/><path d="M17.100 24.800l7.700.8.200 2-7.700-.6z" fill="#c0e8ff"/><path d="M25.300 24.800l2.800.2.200 2.400-2.800-.2z" fill="#f4d800"/><path d="M1.300 20.200l1.300.3.2 2.300-1.300-.4z" fill="#e8d020"/><path d="M6.100 27.600l9 1.600.2 2.200-9-2z" fill="#ececec"/><path d="M21 32l4.800.3v1L21 33z" fill="#f4f4f4"/><ellipse cx="32.700" cy="28.200" rx="2.900" ry="6.200" fill="#202020" transform="rotate(8 32.700 28.200)"/><ellipse cx="33" cy="28.400" rx="1.500" ry="4" fill="#b8b8b8" transform="rotate(8 33 28.400)"/><path d="M29.500 23.500c1-2.500 4-3 6-1.500" stroke="#f0f0f0" stroke-width="1" fill="none"/><path d="M43 14.500l2.800-1.500.2 5-2 1.500z" fill="#282828"/><path d="M12 8l1.800.3.500 2-1.500-.3z" fill="#404040"/></svg></div>
<span class="t " style="top:91px;left:274px;letter-spacing:0.423px;font-size:17px;line-height:20px;height:20px;color:#08246b;margin-top:-5px;-webkit-text-stroke:.35px #08246b">Car Hire Search Results</span>
<div class="ic" style="left:1223px;top:85px"><svg width="13" height="11" viewBox="0 0 13 11"><path d="M.5 1h11l-5.500 9z" fill="#808080"/><path d="M5.500 1.500h2l-.5 1h-1z" fill="#d0d0d0"/></svg></div>
<span class="t " style="top:102px;left:1217px;letter-spacing:-0.091px;color:#fff">More</span>
<span class="t " style="top:101px;left:1216px;letter-spacing:-0.091px;color:#848284">More</span>
<div class="ic" style="left:1257px;top:85px"><svg width="10" height="10" viewBox="0 0 10 10"><rect x="1" y="1" width="8" height="8" fill="#808080"/><rect x="1.500" y="1.500" width="1.500" height="2" fill="#d8d8d8"/></svg></div>
<span class="t " style="top:102px;left:1253px;letter-spacing:-0.410px;color:#fff">Stop</span>
<span class="t " style="top:101px;left:1252px;letter-spacing:-0.410px;color:#848284">Stop</span>
<div class="ic" style="left:1321px;top:83px"><svg width="17" height="16" viewBox="0 0 17 16"><path d="M1 3l1.200 11.500c.5 1.200 8.600 1.200 9.100 0L12.500 3z" fill="#80b0d4"/><path d="M3 4.500l.8 10" stroke="#d4e8f8" stroke-width="1.600"/><path d="M9.500 4.500l-.5 10" stroke="#5c90b8" stroke-width="1.500"/><ellipse cx="6.750" cy="3" rx="5.750" ry="2" fill="#c4dcf0" stroke="#6898c0" stroke-width=".8"/><ellipse cx="6.750" cy="3.200" rx="4" ry="1.100" fill="#98c0e0"/><circle cx="11.700" cy="11.500" r="4.200" fill="#f03030"/><circle cx="11.700" cy="11.500" r="4.200" fill="none" stroke="#c81818" stroke-width=".7"/><rect x="9" y="10.600" width="5.400" height="1.800" rx=".5" fill="#fff"/></svg></div>
<span class="t " style="top:101px;left:1284px;letter-spacing:-0.126px;">Erase Filtered Out</span>
<div class="ic" style="left:1398px;top:82px"><svg width="16" height="17" viewBox="0 0 16 17"><path d="M.5 3.500h11.500M1.500 3.500l1.400 6.800h7.800L12 3.500M3.500 3.500v6.800M5.300 3.500v6.800M7.100 3.500v6.800M8.900 3.500v6.800M10.600 3.500v6.800M11.800 3.500l.9-2.800h2.800" stroke="#787878" stroke-width=".95" fill="none"/><circle cx="2.600" cy="14.500" r="1.600" fill="#fff" stroke="#e81818" stroke-width="1.100"/><circle cx="8.600" cy="14.500" r="1.600" fill="#fff" stroke="#e81818" stroke-width="1.100"/><path d="M4.300 14.500h2.700" stroke="#e81818" stroke-width="1"/></svg></div>
<span class="t " style="top:101px;left:1390px;letter-spacing:-0.315px;">Basket</span>
<div class="ic" style="left:1450px;top:83px"><svg width="17" height="16" viewBox="0 0 17 16"><circle cx="5.500" cy="5" r="4.800" fill="#5cb848" fill-opacity=".55"/><path d="M6.200.3v1c1.800.2 2.800 1 3 2.300l-1.600.3c-.2-.7-.8-1.100-1.800-1-1 .1-1.400 1-.4 1.500 1.600.7 4 1 3.900 3.300-.1 1.500-1.200 2.300-2.800 2.500v1.100h-1.200v-1.100c-1.900-.2-2.900-1.100-3.100-2.600l1.600-.3c.2.900.9 1.400 2 1.400 1.200-.1 1.600-1 .8-1.600-1.500-.9-3.900-.9-3.900-3.200 0-1.300 1-2.100 2.500-2.400V.3z" fill="#38a030"/><rect x="1" y="9.300" width="4.600" height="2.300" fill="#e81020"/><circle cx="8" cy="7.800" r="2.300" fill="#e81020"/><circle cx="13.500" cy="13" r="2.500" fill="#e81020"/><path d="M13.500 5.500l-5.500 10" stroke="#e81020" stroke-width="2.300"/><circle cx="8" cy="7.800" r=".8" fill="#ff9090"/><circle cx="13.500" cy="13" r=".9" fill="#ff9090"/></svg></div>
<span class="t " style="top:101px;left:1433.5px;letter-spacing:-0.180px;">Nett Price</span>
<div class="ic" style="left:1514px;top:82px"><svg width="17" height="17" viewBox="0 0 17 17"><path d="M1.500 1l3 3M12.500 13l3.500 3.500" stroke="#a07830" stroke-width="2.200" stroke-linecap="round"/><path d="M1.500 1l1.500 1.500M14 14.500l2 2" stroke="#503810" stroke-width="1.600"/><circle cx="8.500" cy="8.500" r="6.500" fill="#f0f6ff" stroke="#8c98ac" stroke-width="1.700"/><circle cx="8.500" cy="8.500" r="4.600" fill="#d4e8ff"/><path d="M5.200 4.500l5 3.200-2.200 1.900z" fill="#3060d0"/><path d="M12 12.500l-4.200-3 2.200-1.900z" fill="#e02828"/><circle cx="8.600" cy="8.600" r=".9" fill="#fff"/></svg></div>
<span class="t " style="top:101px;left:1499px;letter-spacing:-0.053px;">Navigate</span>
<div class="ic" style="left:1561px;top:85px"><svg width="13" height="12" viewBox="0 0 13 12"><g transform="scale(1.080,1)"><path d="M2 2l8 8M10 2l-8 8" stroke="#e02828" stroke-width="3.700" stroke-linecap="round"/><path d="M2.200 2.200l7.600 7.600M9.800 2.200l-7.600 7.600" stroke="#f85858" stroke-width="1.700" stroke-linecap="round"/></g></svg></div>
<span class="t " style="top:101px;left:1554px;">Close</span>
<div class="" style="left:1381px;top:82px;width:1px;height:32px;background:#848284"></div>
<div class="" style="left:1382px;top:82px;width:1px;height:32px;background:#fff"></div>
<div class="" style="left:1490px;top:82px;width:1px;height:32px;background:#848284"></div>
<div class="" style="left:1491px;top:82px;width:1px;height:32px;background:#fff"></div>
<span class="t " style="top:143px;left:219px;letter-spacing:-0.231px;">Pick up at</span>
<div class="sunk" style="left:278px;top:138px;width:120px;height:21px;"></div>
<span class="t " style="top:143px;left:283px;letter-spacing:0.022px;">15/09/2018 08:00</span>
<div class="flat" style="left:380px;top:141px;width:16px;height:15px;"><div style="left:4px;top:4px;border:3px solid transparent;border-top:3px solid #000;border-bottom:0;width:0;height:0"></div></div>
<span class="t " style="top:169px;left:219px;letter-spacing:0.166px;">Drop off at</span>
<div class="sunk" style="left:278px;top:164px;width:120px;height:21px;"></div>
<span class="t " style="top:169px;left:283px;">15/09/2018 17:45</span>
<div class="flat" style="left:380px;top:167px;width:16px;height:15px;"><div style="left:4px;top:4px;border:3px solid transparent;border-top:3px solid #000;border-bottom:0;width:0;height:0"></div></div>
<span class="t " style="top:195px;left:219px;letter-spacing:-0.276px;">Search in</span>
<div class="" style="left:278px;top:190px;width:49px;height:21px;border:1px solid;border-color:#848284 #fff #fff #848284;background:repeating-conic-gradient(#fff 0% 25%,#d6d3ce 0% 50%) 0 0/2px 2px"></div>
<span class="t " style="top:196px;left:283px;letter-spacing:-0.051px;">Airports</span>
<span class="t " style="top:196px;left:331px;letter-spacing:-0.004px;">Offices</span>
<span class="t " style="top:196px;left:376px;letter-spacing:0.088px;">Drop off offices</span>
<span class="t " style="top:219px;left:219px;letter-spacing:-0.440px;">Pick up</span>
<div class="sunk" style="left:282px;top:214px;width:240px;height:21px;"></div>
<span class="t " style="top:219px;left:286px;letter-spacing:0.064px;">Orlando Intl Airport</span>
<div class="flat" style="left:504px;top:217px;width:16px;height:15px;"><div style="left:4px;top:4px;border:3px solid transparent;border-top:3px solid #000;border-bottom:0;width:0;height:0"></div></div>
<span class="t " style="top:245px;left:219px;letter-spacing:0.133px;">Drop off</span>
<div class="sunk" style="left:282px;top:240px;width:240px;height:21px;"></div>
<span class="t " style="top:245px;left:286px;letter-spacing:0.064px;">Orlando Intl Airport</span>
<div class="flat" style="left:504px;top:243px;width:16px;height:15px;"><div style="left:4px;top:4px;border:3px solid transparent;border-top:3px solid #000;border-bottom:0;width:0;height:0"></div></div>
<div style="left:223px;top:274px;width:0;height:0;border:4px solid transparent;border-left:4px solid #08246b;border-right:0"></div>
<span class="t b" style="top:272px;left:234px;letter-spacing:0.016px;">Enter promotion code...</span>
<div style="left:223px;top:295px;width:0;height:0;border:4px solid transparent;border-left:4px solid #08246b;border-right:0"></div>
<span class="t b" style="top:293px;left:234px;letter-spacing:0.113px;">Enter membership number...</span>
<div class="flat" style="left:444px;top:313px;width:100px;height:26px;"></div>
<div class="ic" style="left:465px;top:319px"><svg width="17" height="17" viewBox="0 0 17 17"><circle cx="7.800" cy="8" r="7.300" fill="#1888f0"/><path d="M2 4.500C4 1.500 8 .3 11 1.800" stroke="#28d0f8" stroke-width="1.500" fill="none"/><path d="M.8 7c0 3 1.500 5.500 4 7" stroke="#20b8f8" stroke-width="1.200" fill="none"/><path d="M12.500 2.500c2 .5 3.500 2.500 3.500 4.500l-2 1.200-1.500-2.500z" fill="#70c818"/><path d="M13.500 3.500l1.500 3" stroke="#c8f020" stroke-width="1"/><path d="M8.500 11.500l3.500-1 1 2.500-3 2.700-1.800-.2z" fill="#70d020"/><path d="M9.500 12.500l2 1.500" stroke="#c0f828" stroke-width="1"/><circle cx="6.400" cy="6.900" r="4.400" fill="#58b8e8"/><path d="M3.500 5.500c1-1.500 3-2 4-1s.5 2.500-.5 3.500-2 2-3 1.500-1-2.500-.5-4z" fill="#78c070"/><circle cx="5.300" cy="7" r="1.700" fill="#fff" fill-opacity=".9"/><path d="M7.500 5.500c1.500 0 2.500 1.500 2 3" stroke="#38b0f0" stroke-width="1.600" fill="none"/><circle cx="6.400" cy="6.900" r="4.400" fill="none" stroke="#fff" stroke-width="1.200"/><circle cx="6.400" cy="6.900" r="5.100" fill="none" stroke="#404860" stroke-opacity=".45" stroke-width=".5"/><path d="M9.800 10.300l5.500 5.800" stroke="#a85c10" stroke-width="1.700" stroke-linecap="round"/><path d="M9.500 10l1.200 1.200" stroke="#303870" stroke-width="1.400"/></svg></div>
<span class="t" style="left:488px;top:320px;letter-spacing:-.4px">Search</span>
<div class="" style="left:488px;top:331px;width:6px;height:1px;background:#000"></div>
<span class="t b" style="top:355px;left:216px;letter-spacing:0.204px;">Search results: 36/36</span>
<div class="" style="left:218px;top:370px;width:1362px;height:387px;border:1px solid;border-color:#848284 #fff #fff #848284;box-shadow:inset 1px 1px 0 #424142,inset 0 -1px 0 #d6d3ce;background:#fff"></div>
<div class="" style="left:220px;top:372px;width:1352px;height:19px;background:#d6d3ce;border-top:2px solid #fff;border-bottom:1px solid #424142;box-shadow:inset 0 -1px 0 #848284"></div>
<div class="" style="left:338px;top:374px;width:1px;height:15px;background:#848284"></div>
<div class="" style="left:339px;top:373px;width:1px;height:16px;background:#424142"></div>
<span class="t " style="top:376px;left:221.5px;letter-spacing:-0.207px;">Description</span>
<div class="" style="left:363px;top:374px;width:1px;height:15px;background:#848284"></div>
<div class="" style="left:364px;top:373px;width:1px;height:16px;background:#424142"></div>
<div class="" style="left:340px;top:373px;width:1px;height:15px;background:#fff"></div>
<span class="t " style="top:376px;left:61px;width:300px;text-align:right;">S</span>
<div class="" style="left:563px;top:374px;width:1px;height:15px;background:#848284"></div>
<div class="" style="left:564px;top:373px;width:1px;height:16px;background:#424142"></div>
<div class="" style="left:365px;top:373px;width:1px;height:15px;background:#fff"></div>
<span class="t " style="top:376px;left:366.5px;letter-spacing:-0.318px;">Car Group</span>
<div class="" style="left:638px;top:374px;width:1px;height:15px;background:#848284"></div>
<div class="" style="left:639px;top:373px;width:1px;height:16px;background:#424142"></div>
<div class="" style="left:565px;top:373px;width:1px;height:15px;background:#fff"></div>
<span class="t " style="top:376px;left:566.5px;letter-spacing:-0.389px;">Supplier</span>
<div class="" style="left:673px;top:374px;width:1px;height:15px;background:#848284"></div>
<div class="" style="left:674px;top:373px;width:1px;height:16px;background:#424142"></div>
<div class="" style="left:640px;top:373px;width:1px;height:15px;background:#fff"></div>
<span class="t " style="top:376px;left:641.5px;letter-spacing:-0.880px;">DOW</span>
<div class="" style="left:743px;top:374px;width:1px;height:15px;background:#848284"></div>
<div class="" style="left:744px;top:373px;width:1px;height:16px;background:#424142"></div>
<div class="" style="left:675px;top:373px;width:1px;height:15px;background:#fff"></div>
<span class="t " style="top:376px;left:676.5px;letter-spacing:-0.300px;">Pick Up At</span>
<div class="" style="left:783px;top:374px;width:1px;height:15px;background:#848284"></div>
<div class="" style="left:784px;top:373px;width:1px;height:16px;background:#424142"></div>
<div class="" style="left:745px;top:373px;width:1px;height:15px;background:#fff"></div>
<span class="t " style="top:376px;left:746.5px;letter-spacing:-0.637px;">Time</span>
<div class="" style="left:818px;top:374px;width:1px;height:15px;background:#848284"></div>
<div class="" style="left:819px;top:373px;width:1px;height:16px;background:#424142"></div>
<div class="" style="left:785px;top:373px;width:1px;height:15px;background:#fff"></div>
<span class="t " style="top:376px;left:786.5px;letter-spacing:-0.880px;">DOW</span>
<div class="" style="left:888px;top:374px;width:1px;height:15px;background:#848284"></div>
<div class="" style="left:889px;top:373px;width:1px;height:16px;background:#424142"></div>
<div class="" style="left:820px;top:373px;width:1px;height:15px;background:#fff"></div>
<span class="t " style="top:376px;left:821.5px;letter-spacing:0.094px;">Drop Off At</span>
<div class="" style="left:928px;top:374px;width:1px;height:15px;background:#848284"></div>
<div class="" style="left:929px;top:373px;width:1px;height:16px;background:#424142"></div>
<div class="" style="left:890px;top:373px;width:1px;height:15px;background:#fff"></div>
<span class="t " style="top:376px;left:891.5px;letter-spacing:-0.637px;">Time</span>
<div class="" style="left:953px;top:374px;width:1px;height:15px;background:#848284"></div>
<div class="" style="left:954px;top:373px;width:1px;height:16px;background:#424142"></div>
<div class="" style="left:930px;top:373px;width:1px;height:15px;background:#fff"></div>
<span class="t " style="top:376px;left:651px;width:300px;text-align:right;">D</span>
<div class="" style="left:1003px;top:374px;width:1px;height:15px;background:#848284"></div>
<div class="" style="left:1004px;top:373px;width:1px;height:16px;background:#424142"></div>
<div class="" style="left:955px;top:373px;width:1px;height:15px;background:#fff"></div>
<span class="t " style="top:376px;left:956.5px;letter-spacing:-0.629px;">Pick Up</span>
<div class="" style="left:1053px;top:374px;width:1px;height:15px;background:#848284"></div>
<div class="" style="left:1054px;top:373px;width:1px;height:16px;background:#424142"></div>
<div class="" style="left:1005px;top:373px;width:1px;height:15px;background:#fff"></div>
<span class="t " style="top:376px;left:1006.5px;letter-spacing:0.016px;">Drop Off</span>
<div class="" style="left:1108px;top:374px;width:1px;height:15px;background:#848284"></div>
<div class="" style="left:1109px;top:373px;width:1px;height:16px;background:#424142"></div>
<div class="" style="left:1055px;top:373px;width:1px;height:15px;background:#fff"></div>
<span class="t " style="top:376px;left:806px;width:300px;text-align:right;letter-spacing:-0.362px;">Price</span>
<div class="" style="left:1173px;top:374px;width:1px;height:15px;background:#848284"></div>
<div class="" style="left:1174px;top:373px;width:1px;height:16px;background:#424142"></div>
<div class="" style="left:1110px;top:373px;width:1px;height:15px;background:#fff"></div>
<span class="t " style="top:376px;left:864px;width:300px;text-align:right;letter-spacing:-0.315px;">Basket</span>
<div class="" style="left:1248px;top:374px;width:1px;height:15px;background:#848284"></div>
<div class="" style="left:1249px;top:373px;width:1px;height:16px;background:#424142"></div>
<div class="" style="left:1175px;top:373px;width:1px;height:15px;background:#fff"></div>
<span class="t " style="top:376px;left:1176.5px;letter-spacing:-0.324px;">Car Supplier</span>
<div class="" style="left:1273px;top:374px;width:1px;height:15px;background:#848284"></div>
<div class="" style="left:1274px;top:373px;width:1px;height:16px;background:#424142"></div>
<div class="" style="left:1250px;top:373px;width:1px;height:15px;background:#fff"></div>
<span class="t " style="top:376px;left:1251.5px;letter-spacing:-0.891px;">AC</span>
<div class="" style="left:1303px;top:374px;width:1px;height:15px;background:#848284"></div>
<div class="" style="left:1304px;top:373px;width:1px;height:16px;background:#424142"></div>
<div class="" style="left:1275px;top:373px;width:1px;height:15px;background:#fff"></div>
<span class="t " style="top:376px;left:1276.5px;">T</span>
<div class="" style="left:1305px;top:373px;width:1px;height:15px;background:#fff"></div>
<svg style="position:absolute;left:548px;top:375px" width="14" height="13"><path d="M1 1.5h12l-5 5.5v5l-2-1.5v-3.5z" fill="#fff" stroke="#000" stroke-width="1"/></svg>
<div style="left:1165px;top:379px;width:0;height:0;border:4px solid transparent;border-top:4px solid #848284;border-bottom:0"></div>
<div style="left:220px;top:391px;width:1352px;height:364px;overflow:hidden;background:#fff">
<div style="left:0;top:15px;width:1084px;height:360px;background:#b5e3ff"></div>
<div style="left:119px;top:15px;width:1px;height:360px;background:#d6d3ce"></div>
<div style="left:144px;top:15px;width:1px;height:360px;background:#d6d3ce"></div>
<div style="left:344px;top:15px;width:1px;height:360px;background:#d6d3ce"></div>
<div style="left:419px;top:15px;width:1px;height:360px;background:#d6d3ce"></div>
<div style="left:454px;top:15px;width:1px;height:360px;background:#d6d3ce"></div>
<div style="left:524px;top:15px;width:1px;height:360px;background:#d6d3ce"></div>
<div style="left:564px;top:15px;width:1px;height:360px;background:#d6d3ce"></div>
<div style="left:599px;top:15px;width:1px;height:360px;background:#d6d3ce"></div>
<div style="left:669px;top:15px;width:1px;height:360px;background:#d6d3ce"></div>
<div style="left:709px;top:15px;width:1px;height:360px;background:#d6d3ce"></div>
<div style="left:734px;top:15px;width:1px;height:360px;background:#d6d3ce"></div>
<div style="left:784px;top:15px;width:1px;height:360px;background:#d6d3ce"></div>
<div style="left:834px;top:15px;width:1px;height:360px;background:#d6d3ce"></div>
<div style="left:889px;top:15px;width:1px;height:360px;background:#d6d3ce"></div>
<div style="left:954px;top:15px;width:1px;height:360px;background:#d6d3ce"></div>
<div style="left:1029px;top:15px;width:1px;height:360px;background:#d6d3ce"></div>
<div style="left:1054px;top:15px;width:1px;height:360px;background:#d6d3ce"></div>
<div style="left:1084px;top:15px;width:1px;height:360px;background:#d6d3ce"></div>
<div style="left:0;top:29px;width:1352px;height:1px;background:#d6d3ce"></div>
<div style="left:0;top:44px;width:1352px;height:1px;background:#d6d3ce"></div>
<div style="left:0;top:59px;width:1352px;height:1px;background:#d6d3ce"></div>
<div style="left:0;top:74px;width:1352px;height:1px;background:#d6d3ce"></div>
<div style="left:0;top:89px;width:1352px;height:1px;background:#d6d3ce"></div>
<div style="left:0;top:104px;width:1352px;height:1px;background:#d6d3ce"></div>
<div style="left:0;top:119px;width:1352px;height:1px;background:#d6d3ce"></div>
<div style="left:0;top:134px;width:1352px;height:1px;background:#d6d3ce"></div>
<div style="left:0;top:149px;width:1352px;height:1px;background:#d6d3ce"></div>
<div style="left:0;top:164px;width:1352px;height:1px;background:#d6d3ce"></div>
<div style="left:0;top:179px;width:1352px;height:1px;background:#d6d3ce"></div>
<div style="left:0;top:194px;width:1352px;height:1px;background:#d6d3ce"></div>
<div style="left:0;top:209px;width:1352px;height:1px;background:#d6d3ce"></div>
<div style="left:0;top:224px;width:1352px;height:1px;background:#d6d3ce"></div>
<div style="left:0;top:239px;width:1352px;height:1px;background:#d6d3ce"></div>
<div style="left:0;top:254px;width:1352px;height:1px;background:#d6d3ce"></div>
<div style="left:0;top:269px;width:1352px;height:1px;background:#d6d3ce"></div>
<div style="left:0;top:284px;width:1352px;height:1px;background:#d6d3ce"></div>
<div style="left:0;top:299px;width:1352px;height:1px;background:#d6d3ce"></div>
<div style="left:0;top:314px;width:1352px;height:1px;background:#d6d3ce"></div>
<div style="left:0;top:329px;width:1352px;height:1px;background:#d6d3ce"></div>
<div style="left:0;top:344px;width:1352px;height:1px;background:#d6d3ce"></div>
<div style="left:0;top:359px;width:1352px;height:1px;background:#d6d3ce"></div>
<div style="left:0;top:374px;width:1352px;height:1px;background:#d6d3ce"></div>
<div style="left:0;top:389px;width:1352px;height:1px;background:#d6d3ce"></div>
<div style="left:0;top:0;width:1352px;height:15px;background:#08246b"></div>
<span class="t w" style="top:1px;left:1.5px;letter-spacing:-0.076px;">Toyota Corolla Or si…</span>
<span class="t w" style="top:1px;left:-159px;width:300px;text-align:right;">5</span>
<span class="t w" style="top:1px;left:146.5px;letter-spacing:-0.027px;">Car(Intermediate) - Inclusive</span>
<span class="t w" style="top:1px;left:346.5px;letter-spacing:-0.207px;">Flexible Car…</span>
<span class="t w" style="top:1px;left:421.5px;letter-spacing:-0.339px;">Sat</span>
<span class="t w" style="top:1px;left:456.5px;letter-spacing:0.094px;">15/09/2018</span>
<span class="t w" style="top:1px;left:526.5px;letter-spacing:0.044px;">08:00</span>
<span class="t w" style="top:1px;left:566.5px;letter-spacing:-0.339px;">Sat</span>
<span class="t w" style="top:1px;left:601.5px;letter-spacing:0.094px;">15/09/2018</span>
<span class="t w" style="top:1px;left:671.5px;letter-spacing:-0.056px;">17:45</span>
<span class="t w" style="top:1px;left:431px;width:300px;text-align:right;">1</span>
<span class="t w" style="top:1px;left:736.5px;letter-spacing:-0.225px;">On Air…</span>
<span class="t w" style="top:1px;left:786.5px;letter-spacing:-0.225px;">On Air…</span>
<span class="t w" style="top:1px;left:586px;width:300px;text-align:right;letter-spacing:0.094px;">36.72</span>
<span class="t w" style="top:1px;left:651px;width:300px;text-align:right;letter-spacing:0.094px;">36.72</span>
<span class="t w" style="top:1px;left:956.5px;letter-spacing:-0.438px;">Alamo</span>
<span class="t w" style="top:1px;left:1031.5px;letter-spacing:-0.208px;">yes</span>
<span class="t w" style="top:1px;left:1056.5px;letter-spacing:-0.105px;">auto</span>
<span class="t " style="top:16px;left:1.5px;letter-spacing:-0.076px;">Toyota Corolla Or si…</span>
<span class="t " style="top:16px;left:-159px;width:300px;text-align:right;">5</span>
<span class="t " style="top:16px;left:146.5px;letter-spacing:-0.051px;">Intermediate - Inclusive</span>
<span class="t " style="top:16px;left:346.5px;letter-spacing:-0.207px;">Flexible Car…</span>
<span class="t " style="top:16px;left:421.5px;letter-spacing:-0.339px;">Sat</span>
<span class="t " style="top:16px;left:456.5px;letter-spacing:0.094px;">15/09/2018</span>
<span class="t " style="top:16px;left:526.5px;letter-spacing:0.044px;">08:00</span>
<span class="t " style="top:16px;left:566.5px;letter-spacing:-0.339px;">Sat</span>
<span class="t " style="top:16px;left:601.5px;letter-spacing:0.094px;">15/09/2018</span>
<span class="t " style="top:16px;left:671.5px;letter-spacing:-0.056px;">17:45</span>
<span class="t " style="top:16px;left:431px;width:300px;text-align:right;">1</span>
<span class="t " style="top:16px;left:736.5px;letter-spacing:-0.225px;">On Air…</span>
<span class="t " style="top:16px;left:786.5px;letter-spacing:-0.225px;">On Air…</span>
<span class="t " style="top:16px;left:586px;width:300px;text-align:right;letter-spacing:0.094px;">36.72</span>
<span class="t " style="top:16px;left:651px;width:300px;text-align:right;letter-spacing:0.094px;">36.72</span>
<span class="t " style="top:16px;left:956.5px;letter-spacing:-0.438px;">Alamo</span>
<span class="t " style="top:16px;left:1031.5px;letter-spacing:-0.208px;">yes</span>
<span class="t " style="top:16px;left:1056.5px;letter-spacing:-0.105px;">auto</span>
<span class="t " style="top:31px;left:1.5px;letter-spacing:-0.076px;">Toyota Corolla Or si…</span>
<span class="t " style="top:31px;left:-159px;width:300px;text-align:right;">5</span>
<span class="t " style="top:31px;left:146.5px;letter-spacing:-0.027px;">Car(Intermediate) - Inclusive</span>
<span class="t " style="top:31px;left:346.5px;letter-spacing:-0.207px;">Flexible Car…</span>
<span class="t " style="top:31px;left:421.5px;letter-spacing:-0.339px;">Sat</span>
<span class="t " style="top:31px;left:456.5px;letter-spacing:0.094px;">15/09/2018</span>
<span class="t " style="top:31px;left:526.5px;letter-spacing:0.044px;">08:00</span>
<span class="t " style="top:31px;left:566.5px;letter-spacing:-0.339px;">Sat</span>
<span class="t " style="top:31px;left:601.5px;letter-spacing:0.094px;">15/09/2018</span>
<span class="t " style="top:31px;left:671.5px;letter-spacing:-0.056px;">17:45</span>
<span class="t " style="top:31px;left:431px;width:300px;text-align:right;">1</span>
<span class="t " style="top:31px;left:736.5px;letter-spacing:-0.225px;">On Air…</span>
<span class="t " style="top:31px;left:786.5px;letter-spacing:-0.225px;">On Air…</span>
<span class="t " style="top:31px;left:586px;width:300px;text-align:right;letter-spacing:0.094px;">36.72</span>
<span class="t " style="top:31px;left:651px;width:300px;text-align:right;letter-spacing:0.094px;">36.72</span>
<span class="t " style="top:31px;left:956.5px;letter-spacing:-0.438px;">Alamo</span>
<span class="t " style="top:31px;left:1031.5px;letter-spacing:-0.208px;">yes</span>
<span class="t " style="top:31px;left:1056.5px;letter-spacing:-0.105px;">auto</span>
<span class="t " style="top:46px;left:1.5px;letter-spacing:-0.076px;">Toyota Corolla Or si…</span>
<span class="t " style="top:46px;left:-159px;width:300px;text-align:right;">5</span>
<span class="t " style="top:46px;left:146.5px;letter-spacing:-0.051px;">Intermediate - Inclusive</span>
<span class="t " style="top:46px;left:346.5px;letter-spacing:-0.207px;">Flexible Car…</span>
<span class="t " style="top:46px;left:421.5px;letter-spacing:-0.339px;">Sat</span>
<span class="t " style="top:46px;left:456.5px;letter-spacing:0.094px;">15/09/2018</span>
<span class="t " style="top:46px;left:526.5px;letter-spacing:0.044px;">08:00</span>
<span class="t " style="top:46px;left:566.5px;letter-spacing:-0.339px;">Sat</span>
<span class="t " style="top:46px;left:601.5px;letter-spacing:0.094px;">15/09/2018</span>
<span class="t " style="top:46px;left:671.5px;letter-spacing:-0.056px;">17:45</span>
<span class="t " style="top:46px;left:431px;width:300px;text-align:right;">1</span>
<span class="t " style="top:46px;left:736.5px;letter-spacing:-0.225px;">On Air…</span>
<span class="t " style="top:46px;left:786.5px;letter-spacing:-0.225px;">On Air…</span>
<span class="t " style="top:46px;left:586px;width:300px;text-align:right;letter-spacing:0.094px;">36.72</span>
<span class="t " style="top:46px;left:651px;width:300px;text-align:right;letter-spacing:0.094px;">36.72</span>
<span class="t " style="top:46px;left:956.5px;letter-spacing:-0.438px;">Alamo</span>
<span class="t " style="top:46px;left:1031.5px;letter-spacing:-0.208px;">yes</span>
<span class="t " style="top:46px;left:1056.5px;letter-spacing:-0.105px;">auto</span>
<span class="t " style="top:61px;left:1.5px;letter-spacing:-0.076px;">Toyota Corolla Or si…</span>
<span class="t " style="top:61px;left:-159px;width:300px;text-align:right;">5</span>
<span class="t " style="top:61px;left:146.5px;letter-spacing:-0.075px;">Car(Intermediate) - Inclusive - Plus E…</span>
<span class="t " style="top:61px;left:346.5px;letter-spacing:-0.207px;">Flexible Car…</span>
<span class="t " style="top:61px;left:421.5px;letter-spacing:-0.339px;">Sat</span>
<span class="t " style="top:61px;left:456.5px;letter-spacing:0.094px;">15/09/2018</span>
<span class="t " style="top:61px;left:526.5px;letter-spacing:0.044px;">08:00</span>
<span class="t " style="top:61px;left:566.5px;letter-spacing:-0.339px;">Sat</span>
<span class="t " style="top:61px;left:601.5px;letter-spacing:0.094px;">15/09/2018</span>
<span class="t " style="top:61px;left:671.5px;letter-spacing:-0.056px;">17:45</span>
<span class="t " style="top:61px;left:431px;width:300px;text-align:right;">1</span>
<span class="t " style="top:61px;left:736.5px;letter-spacing:-0.225px;">On Air…</span>
<span class="t " style="top:61px;left:786.5px;letter-spacing:-0.225px;">On Air…</span>
<span class="t " style="top:61px;left:586px;width:300px;text-align:right;letter-spacing:0.094px;">39.41</span>
<span class="t " style="top:61px;left:651px;width:300px;text-align:right;letter-spacing:0.094px;">39.41</span>
<span class="t " style="top:61px;left:956.5px;letter-spacing:-0.438px;">Alamo</span>
<span class="t " style="top:61px;left:1031.5px;letter-spacing:-0.208px;">yes</span>
<span class="t " style="top:61px;left:1056.5px;letter-spacing:-0.105px;">auto</span>
<span class="t " style="top:76px;left:1.5px;letter-spacing:-0.076px;">Toyota Corolla Or si…</span>
<span class="t " style="top:76px;left:-159px;width:300px;text-align:right;">5</span>
<span class="t " style="top:76px;left:146.5px;letter-spacing:-0.117px;">Intermediate - Inclusive - Plus Excess …</span>
<span class="t " style="top:76px;left:346.5px;letter-spacing:-0.207px;">Flexible Car…</span>
<span class="t " style="top:76px;left:421.5px;letter-spacing:-0.339px;">Sat</span>
<span class="t " style="top:76px;left:456.5px;letter-spacing:0.094px;">15/09/2018</span>
<span class="t " style="top:76px;left:526.5px;letter-spacing:0.044px;">08:00</span>
<span class="t " style="top:76px;left:566.5px;letter-spacing:-0.339px;">Sat</span>
<span class="t " style="top:76px;left:601.5px;letter-spacing:0.094px;">15/09/2018</span>
<span class="t " style="top:76px;left:671.5px;letter-spacing:-0.056px;">17:45</span>
<span class="t " style="top:76px;left:431px;width:300px;text-align:right;">1</span>
<span class="t " style="top:76px;left:736.5px;letter-spacing:-0.225px;">On Air…</span>
<span class="t " style="top:76px;left:786.5px;letter-spacing:-0.225px;">On Air…</span>
<span class="t " style="top:76px;left:586px;width:300px;text-align:right;letter-spacing:0.094px;">39.41</span>
<span class="t " style="top:76px;left:651px;width:300px;text-align:right;letter-spacing:0.094px;">39.41</span>
<span class="t " style="top:76px;left:956.5px;letter-spacing:-0.438px;">Alamo</span>
<span class="t " style="top:76px;left:1031.5px;letter-spacing:-0.208px;">yes</span>
<span class="t " style="top:76px;left:1056.5px;letter-spacing:-0.105px;">auto</span>
<span class="t " style="top:91px;left:1.5px;letter-spacing:-0.076px;">Toyota Corolla Or si…</span>
<span class="t " style="top:91px;left:-159px;width:300px;text-align:right;">5</span>
<span class="t " style="top:91px;left:146.5px;letter-spacing:-0.075px;">Car(Intermediate) - Inclusive - Plus E…</span>
<span class="t " style="top:91px;left:346.5px;letter-spacing:-0.207px;">Flexible Car…</span>
<span class="t " style="top:91px;left:421.5px;letter-spacing:-0.339px;">Sat</span>
<span class="t " style="top:91px;left:456.5px;letter-spacing:0.094px;">15/09/2018</span>
<span class="t " style="top:91px;left:526.5px;letter-spacing:0.044px;">08:00</span>
<span class="t " style="top:91px;left:566.5px;letter-spacing:-0.339px;">Sat</span>
<span class="t " style="top:91px;left:601.5px;letter-spacing:0.094px;">15/09/2018</span>
<span class="t " style="top:91px;left:671.5px;letter-spacing:-0.056px;">17:45</span>
<span class="t " style="top:91px;left:431px;width:300px;text-align:right;">1</span>
<span class="t " style="top:91px;left:736.5px;letter-spacing:-0.225px;">On Air…</span>
<span class="t " style="top:91px;left:786.5px;letter-spacing:-0.225px;">On Air…</span>
<span class="t " style="top:91px;left:586px;width:300px;text-align:right;letter-spacing:0.094px;">39.41</span>
<span class="t " style="top:91px;left:651px;width:300px;text-align:right;letter-spacing:0.094px;">39.41</span>
<span class="t " style="top:91px;left:956.5px;letter-spacing:-0.438px;">Alamo</span>
<span class="t " style="top:91px;left:1031.5px;letter-spacing:-0.208px;">yes</span>
<span class="t " style="top:91px;left:1056.5px;letter-spacing:-0.105px;">auto</span>
<span class="t " style="top:106px;left:1.5px;letter-spacing:-0.076px;">Toyota Corolla Or si…</span>
<span class="t " style="top:106px;left:-159px;width:300px;text-align:right;">5</span>
<span class="t " style="top:106px;left:146.5px;letter-spacing:-0.117px;">Intermediate - Inclusive - Plus Excess …</span>
<span class="t " style="top:106px;left:346.5px;letter-spacing:-0.207px;">Flexible Car…</span>
<span class="t " style="top:106px;left:421.5px;letter-spacing:-0.339px;">Sat</span>
<span class="t " style="top:106px;left:456.5px;letter-spacing:0.094px;">15/09/2018</span>
<span class="t " style="top:106px;left:526.5px;letter-spacing:0.044px;">08:00</span>
<span class="t " style="top:106px;left:566.5px;letter-spacing:-0.339px;">Sat</span>
<span class="t " style="top:106px;left:601.5px;letter-spacing:0.094px;">15/09/2018</span>
<span class="t " style="top:106px;left:671.5px;letter-spacing:-0.056px;">17:45</span>
<span class="t " style="top:106px;left:431px;width:300px;text-align:right;">1</span>
<span class="t " style="top:106px;left:736.5px;letter-spacing:-0.225px;">On Air…</span>
<span class="t " style="top:106px;left:786.5px;letter-spacing:-0.225px;">On Air…</span>
<span class="t " style="top:106px;left:586px;width:300px;text-align:right;letter-spacing:0.094px;">39.41</span>
<span class="t " style="top:106px;left:651px;width:300px;text-align:right;letter-spacing:0.094px;">39.41</span>
<span class="t " style="top:106px;left:956.5px;letter-spacing:-0.438px;">Alamo</span>
<span class="t " style="top:106px;left:1031.5px;letter-spacing:-0.208px;">yes</span>
<span class="t " style="top:106px;left:1056.5px;letter-spacing:-0.105px;">auto</span>
<span class="t " style="top:121px;left:1.5px;letter-spacing:-0.328px;">Ford Escape Or simila…</span>
<span class="t " style="top:121px;left:-159px;width:300px;text-align:right;">5</span>
<span class="t " style="top:121px;left:146.5px;letter-spacing:-0.116px;">SUV(Intermediate) - Inclusive</span>
<span class="t " style="top:121px;left:346.5px;letter-spacing:-0.207px;">Flexible Car…</span>
<span class="t " style="top:121px;left:421.5px;letter-spacing:-0.339px;">Sat</span>
<span class="t " style="top:121px;left:456.5px;letter-spacing:0.094px;">15/09/2018</span>
<span class="t " style="top:121px;left:526.5px;letter-spacing:0.044px;">08:00</span>
<span class="t " style="top:121px;left:566.5px;letter-spacing:-0.339px;">Sat</span>
<span class="t " style="top:121px;left:601.5px;letter-spacing:0.094px;">15/09/2018</span>
<span class="t " style="top:121px;left:671.5px;letter-spacing:-0.056px;">17:45</span>
<span class="t " style="top:121px;left:431px;width:300px;text-align:right;">1</span>
<span class="t " style="top:121px;left:736.5px;letter-spacing:-0.225px;">On Air…</span>
<span class="t " style="top:121px;left:786.5px;letter-spacing:-0.225px;">On Air…</span>
<span class="t " style="top:121px;left:586px;width:300px;text-align:right;letter-spacing:0.094px;">41.30</span>
<span class="t " style="top:121px;left:651px;width:300px;text-align:right;letter-spacing:0.094px;">41.30</span>
<span class="t " style="top:121px;left:956.5px;letter-spacing:-0.438px;">Alamo</span>
<span class="t " style="top:121px;left:1031.5px;letter-spacing:-0.208px;">yes</span>
<span class="t " style="top:121px;left:1056.5px;letter-spacing:-0.105px;">auto</span>
<span class="t " style="top:136px;left:1.5px;letter-spacing:-0.328px;">Ford Escape Or simila…</span>
<span class="t " style="top:136px;left:-159px;width:300px;text-align:right;">5</span>
<span class="t " style="top:136px;left:146.5px;letter-spacing:-0.116px;">SUV(Intermediate) - Inclusive</span>
<span class="t " style="top:136px;left:346.5px;letter-spacing:-0.207px;">Flexible Car…</span>
<span class="t " style="top:136px;left:421.5px;letter-spacing:-0.339px;">Sat</span>
<span class="t " style="top:136px;left:456.5px;letter-spacing:0.094px;">15/09/2018</span>
<span class="t " style="top:136px;left:526.5px;letter-spacing:0.044px;">08:00</span>
<span class="t " style="top:136px;left:566.5px;letter-spacing:-0.339px;">Sat</span>
<span class="t " style="top:136px;left:601.5px;letter-spacing:0.094px;">15/09/2018</span>
<span class="t " style="top:136px;left:671.5px;letter-spacing:-0.056px;">17:45</span>
<span class="t " style="top:136px;left:431px;width:300px;text-align:right;">1</span>
<span class="t " style="top:136px;left:736.5px;letter-spacing:-0.225px;">On Air…</span>
<span class="t " style="top:136px;left:786.5px;letter-spacing:-0.225px;">On Air…</span>
<span class="t " style="top:136px;left:586px;width:300px;text-align:right;letter-spacing:0.094px;">41.30</span>
<span class="t " style="top:136px;left:651px;width:300px;text-align:right;letter-spacing:0.094px;">41.30</span>
<span class="t " style="top:136px;left:956.5px;letter-spacing:-0.438px;">Alamo</span>
<span class="t " style="top:136px;left:1031.5px;letter-spacing:-0.208px;">yes</span>
<span class="t " style="top:136px;left:1056.5px;letter-spacing:-0.105px;">auto</span>
<span class="t " style="top:151px;left:1.5px;letter-spacing:-0.076px;">Toyota Corolla Or si…</span>
<span class="t " style="top:151px;left:-159px;width:300px;text-align:right;">5</span>
<span class="t " style="top:151px;left:146.5px;letter-spacing:-0.084px;">Car(Intermediate) - Gold</span>
<span class="t " style="top:151px;left:346.5px;letter-spacing:-0.207px;">Flexible Car…</span>
<span class="t " style="top:151px;left:421.5px;letter-spacing:-0.339px;">Sat</span>
<span class="t " style="top:151px;left:456.5px;letter-spacing:0.094px;">15/09/2018</span>
<span class="t " style="top:151px;left:526.5px;letter-spacing:0.044px;">08:00</span>
<span class="t " style="top:151px;left:566.5px;letter-spacing:-0.339px;">Sat</span>
<span class="t " style="top:151px;left:601.5px;letter-spacing:0.094px;">15/09/2018</span>
<span class="t " style="top:151px;left:671.5px;letter-spacing:-0.056px;">17:45</span>
<span class="t " style="top:151px;left:431px;width:300px;text-align:right;">1</span>
<span class="t " style="top:151px;left:736.5px;letter-spacing:-0.225px;">On Air…</span>
<span class="t " style="top:151px;left:786.5px;letter-spacing:-0.225px;">On Air…</span>
<span class="t " style="top:151px;left:586px;width:300px;text-align:right;letter-spacing:0.094px;">42.10</span>
<span class="t " style="top:151px;left:651px;width:300px;text-align:right;letter-spacing:0.094px;">42.10</span>
<span class="t " style="top:151px;left:956.5px;letter-spacing:-0.438px;">Alamo</span>
<span class="t " style="top:151px;left:1031.5px;letter-spacing:-0.208px;">yes</span>
<span class="t " style="top:151px;left:1056.5px;letter-spacing:-0.105px;">auto</span>
<span class="t " style="top:166px;left:1.5px;letter-spacing:-0.076px;">Toyota Corolla Or si…</span>
<span class="t " style="top:166px;left:-159px;width:300px;text-align:right;">5</span>
<span class="t " style="top:166px;left:146.5px;letter-spacing:-0.074px;">Intermediate - Gold</span>
<span class="t " style="top:166px;left:346.5px;letter-spacing:-0.207px;">Flexible Car…</span>
<span class="t " style="top:166px;left:421.5px;letter-spacing:-0.339px;">Sat</span>
<span class="t " style="top:166px;left:456.5px;letter-spacing:0.094px;">15/09/2018</span>
<span class="t " style="top:166px;left:526.5px;letter-spacing:0.044px;">08:00</span>
<span class="t " style="top:166px;left:566.5px;letter-spacing:-0.339px;">Sat</span>
<span class="t " style="top:166px;left:601.5px;letter-spacing:0.094px;">15/09/2018</span>
<span class="t " style="top:166px;left:671.5px;letter-spacing:-0.056px;">17:45</span>
<span class="t " style="top:166px;left:431px;width:300px;text-align:right;">1</span>
<span class="t " style="top:166px;left:736.5px;letter-spacing:-0.225px;">On Air…</span>
<span class="t " style="top:166px;left:786.5px;letter-spacing:-0.225px;">On Air…</span>
<span class="t " style="top:166px;left:586px;width:300px;text-align:right;letter-spacing:0.094px;">42.10</span>
<span class="t " style="top:166px;left:651px;width:300px;text-align:right;letter-spacing:0.094px;">42.10</span>
<span class="t " style="top:166px;left:956.5px;letter-spacing:-0.438px;">Alamo</span>
<span class="t " style="top:166px;left:1031.5px;letter-spacing:-0.208px;">yes</span>
<span class="t " style="top:166px;left:1056.5px;letter-spacing:-0.105px;">auto</span>
<span class="t " style="top:181px;left:1.5px;letter-spacing:-0.076px;">Toyota Corolla Or si…</span>
<span class="t " style="top:181px;left:-159px;width:300px;text-align:right;">5</span>
<span class="t " style="top:181px;left:146.5px;letter-spacing:-0.084px;">Car(Intermediate) - Gold</span>
<span class="t " style="top:181px;left:346.5px;letter-spacing:-0.207px;">Flexible Car…</span>
<span class="t " style="top:181px;left:421.5px;letter-spacing:-0.339px;">Sat</span>
<span class="t " style="top:181px;left:456.5px;letter-spacing:0.094px;">15/09/2018</span>
<span class="t " style="top:181px;left:526.5px;letter-spacing:0.044px;">08:00</span>
<span class="t " style="top:181px;left:566.5px;letter-spacing:-0.339px;">Sat</span>
<span class="t " style="top:181px;left:601.5px;letter-spacing:0.094px;">15/09/2018</span>
<span class="t " style="top:181px;left:671.5px;letter-spacing:-0.056px;">17:45</span>
<span class="t " style="top:181px;left:431px;width:300px;text-align:right;">1</span>
<span class="t " style="top:181px;left:736.5px;letter-spacing:-0.225px;">On Air…</span>
<span class="t " style="top:181px;left:786.5px;letter-spacing:-0.225px;">On Air…</span>
<span class="t " style="top:181px;left:586px;width:300px;text-align:right;letter-spacing:0.094px;">42.10</span>
<span class="t " style="top:181px;left:651px;width:300px;text-align:right;letter-spacing:0.094px;">42.10</span>
<span class="t " style="top:181px;left:956.5px;letter-spacing:-0.438px;">Alamo</span>
<span class="t " style="top:181px;left:1031.5px;letter-spacing:-0.208px;">yes</span>
<span class="t " style="top:181px;left:1056.5px;letter-spacing:-0.105px;">auto</span>
<span class="t " style="top:196px;left:1.5px;letter-spacing:-0.076px;">Toyota Corolla Or si…</span>
<span class="t " style="top:196px;left:-159px;width:300px;text-align:right;">5</span>
<span class="t " style="top:196px;left:146.5px;letter-spacing:-0.074px;">Intermediate - Gold</span>
<span class="t " style="top:196px;left:346.5px;letter-spacing:-0.207px;">Flexible Car…</span>
<span class="t " style="top:196px;left:421.5px;letter-spacing:-0.339px;">Sat</span>
<span class="t " style="top:196px;left:456.5px;letter-spacing:0.094px;">15/09/2018</span>
<span class="t " style="top:196px;left:526.5px;letter-spacing:0.044px;">08:00</span>
<span class="t " style="top:196px;left:566.5px;letter-spacing:-0.339px;">Sat</span>
<span class="t " style="top:196px;left:601.5px;letter-spacing:0.094px;">15/09/2018</span>
<span class="t " style="top:196px;left:671.5px;letter-spacing:-0.056px;">17:45</span>
<span class="t " style="top:196px;left:431px;width:300px;text-align:right;">1</span>
<span class="t " style="top:196px;left:736.5px;letter-spacing:-0.225px;">On Air…</span>
<span class="t " style="top:196px;left:786.5px;letter-spacing:-0.225px;">On Air…</span>
<span class="t " style="top:196px;left:586px;width:300px;text-align:right;letter-spacing:0.094px;">42.10</span>
<span class="t " style="top:196px;left:651px;width:300px;text-align:right;letter-spacing:0.094px;">42.10</span>
<span class="t " style="top:196px;left:956.5px;letter-spacing:-0.438px;">Alamo</span>
<span class="t " style="top:196px;left:1031.5px;letter-spacing:-0.208px;">yes</span>
<span class="t " style="top:196px;left:1056.5px;letter-spacing:-0.105px;">auto</span>
<span class="t " style="top:211px;left:1.5px;letter-spacing:-0.328px;">Ford Escape Or simila…</span>
<span class="t " style="top:211px;left:-159px;width:300px;text-align:right;">5</span>
<span class="t " style="top:211px;left:146.5px;letter-spacing:-0.166px;">SUV(Intermediate) - Inclusive - Plus E…</span>
<span class="t " style="top:211px;left:346.5px;letter-spacing:-0.207px;">Flexible Car…</span>
<span class="t " style="top:211px;left:421.5px;letter-spacing:-0.339px;">Sat</span>
<span class="t " style="top:211px;left:456.5px;letter-spacing:0.094px;">15/09/2018</span>
<span class="t " style="top:211px;left:526.5px;letter-spacing:0.044px;">08:00</span>
<span class="t " style="top:211px;left:566.5px;letter-spacing:-0.339px;">Sat</span>
<span class="t " style="top:211px;left:601.5px;letter-spacing:0.094px;">15/09/2018</span>
<span class="t " style="top:211px;left:671.5px;letter-spacing:-0.056px;">17:45</span>
<span class="t " style="top:211px;left:431px;width:300px;text-align:right;">1</span>
<span class="t " style="top:211px;left:736.5px;letter-spacing:-0.225px;">On Air…</span>
<span class="t " style="top:211px;left:786.5px;letter-spacing:-0.225px;">On Air…</span>
<span class="t " style="top:211px;left:586px;width:300px;text-align:right;letter-spacing:0.094px;">43.99</span>
<span class="t " style="top:211px;left:651px;width:300px;text-align:right;letter-spacing:0.094px;">43.99</span>
<span class="t " style="top:211px;left:956.5px;letter-spacing:-0.438px;">Alamo</span>
<span class="t " style="top:211px;left:1031.5px;letter-spacing:-0.208px;">yes</span>
<span class="t " style="top:211px;left:1056.5px;letter-spacing:-0.105px;">auto</span>
<span class="t " style="top:226px;left:1.5px;letter-spacing:-0.328px;">Ford Escape Or simila…</span>
<span class="t " style="top:226px;left:-159px;width:300px;text-align:right;">5</span>
<span class="t " style="top:226px;left:146.5px;letter-spacing:-0.166px;">SUV(Intermediate) - Inclusive - Plus E…</span>
<span class="t " style="top:226px;left:346.5px;letter-spacing:-0.207px;">Flexible Car…</span>
<span class="t " style="top:226px;left:421.5px;letter-spacing:-0.339px;">Sat</span>
<span class="t " style="top:226px;left:456.5px;letter-spacing:0.094px;">15/09/2018</span>
<span class="t " style="top:226px;left:526.5px;letter-spacing:0.044px;">08:00</span>
<span class="t " style="top:226px;left:566.5px;letter-spacing:-0.339px;">Sat</span>
<span class="t " style="top:226px;left:601.5px;letter-spacing:0.094px;">15/09/2018</span>
<span class="t " style="top:226px;left:671.5px;letter-spacing:-0.056px;">17:45</span>
<span class="t " style="top:226px;left:431px;width:300px;text-align:right;">1</span>
<span class="t " style="top:226px;left:736.5px;letter-spacing:-0.225px;">On Air…</span>
<span class="t " style="top:226px;left:786.5px;letter-spacing:-0.225px;">On Air…</span>
<span class="t " style="top:226px;left:586px;width:300px;text-align:right;letter-spacing:0.094px;">43.99</span>
<span class="t " style="top:226px;left:651px;width:300px;text-align:right;letter-spacing:0.094px;">43.99</span>
<span class="t " style="top:226px;left:956.5px;letter-spacing:-0.438px;">Alamo</span>
<span class="t " style="top:226px;left:1031.5px;letter-spacing:-0.208px;">yes</span>
<span class="t " style="top:226px;left:1056.5px;letter-spacing:-0.105px;">auto</span>
<span class="t " style="top:241px;left:1.5px;letter-spacing:-0.076px;">Toyota Corolla Or si…</span>
<span class="t " style="top:241px;left:-159px;width:300px;text-align:right;">5</span>
<span class="t " style="top:241px;left:146.5px;letter-spacing:-0.155px;">Car(Intermediate) - Gold - Plus Exces…</span>
<span class="t " style="top:241px;left:346.5px;letter-spacing:-0.207px;">Flexible Car…</span>
<span class="t " style="top:241px;left:421.5px;letter-spacing:-0.339px;">Sat</span>
<span class="t " style="top:241px;left:456.5px;letter-spacing:0.094px;">15/09/2018</span>
<span class="t " style="top:241px;left:526.5px;letter-spacing:0.044px;">08:00</span>
<span class="t " style="top:241px;left:566.5px;letter-spacing:-0.339px;">Sat</span>
<span class="t " style="top:241px;left:601.5px;letter-spacing:0.094px;">15/09/2018</span>
<span class="t " style="top:241px;left:671.5px;letter-spacing:-0.056px;">17:45</span>
<span class="t " style="top:241px;left:431px;width:300px;text-align:right;">1</span>
<span class="t " style="top:241px;left:736.5px;letter-spacing:-0.225px;">On Air…</span>
<span class="t " style="top:241px;left:786.5px;letter-spacing:-0.225px;">On Air…</span>
<span class="t " style="top:241px;left:586px;width:300px;text-align:right;letter-spacing:0.094px;">44.79</span>
<span class="t " style="top:241px;left:651px;width:300px;text-align:right;letter-spacing:0.094px;">44.79</span>
<span class="t " style="top:241px;left:956.5px;letter-spacing:-0.438px;">Alamo</span>
<span class="t " style="top:241px;left:1031.5px;letter-spacing:-0.208px;">yes</span>
<span class="t " style="top:241px;left:1056.5px;letter-spacing:-0.105px;">auto</span>
<span class="t " style="top:256px;left:1.5px;letter-spacing:-0.076px;">Toyota Corolla Or si…</span>
<span class="t " style="top:256px;left:-159px;width:300px;text-align:right;">5</span>
<span class="t " style="top:256px;left:146.5px;letter-spacing:-0.171px;">Intermediate - Gold - Plus Excess Ref…</span>
<span class="t " style="top:256px;left:346.5px;letter-spacing:-0.207px;">Flexible Car…</span>
<span class="t " style="top:256px;left:421.5px;letter-spacing:-0.339px;">Sat</span>
<span class="t " style="top:256px;left:456.5px;letter-spacing:0.094px;">15/09/2018</span>
<span class="t " style="top:256px;left:526.5px;letter-spacing:0.044px;">08:00</span>
<span class="t " style="top:256px;left:566.5px;letter-spacing:-0.339px;">Sat</span>
<span class="t " style="top:256px;left:601.5px;letter-spacing:0.094px;">15/09/2018</span>
<span class="t " style="top:256px;left:671.5px;letter-spacing:-0.056px;">17:45</span>
<span class="t " style="top:256px;left:431px;width:300px;text-align:right;">1</span>
<span class="t " style="top:256px;left:736.5px;letter-spacing:-0.225px;">On Air…</span>
<span class="t " style="top:256px;left:786.5px;letter-spacing:-0.225px;">On Air…</span>
<span class="t " style="top:256px;left:586px;width:300px;text-align:right;letter-spacing:0.094px;">44.79</span>
<span class="t " style="top:256px;left:651px;width:300px;text-align:right;letter-spacing:0.094px;">44.79</span>
<span class="t " style="top:256px;left:956.5px;letter-spacing:-0.438px;">Alamo</span>
<span class="t " style="top:256px;left:1031.5px;letter-spacing:-0.208px;">yes</span>
<span class="t " style="top:256px;left:1056.5px;letter-spacing:-0.105px;">auto</span>
<span class="t " style="top:271px;left:1.5px;letter-spacing:-0.076px;">Toyota Corolla Or si…</span>
<span class="t " style="top:271px;left:-159px;width:300px;text-align:right;">5</span>
<span class="t " style="top:271px;left:146.5px;letter-spacing:-0.155px;">Car(Intermediate) - Gold - Plus Exces…</span>
<span class="t " style="top:271px;left:346.5px;letter-spacing:-0.207px;">Flexible Car…</span>
<span class="t " style="top:271px;left:421.5px;letter-spacing:-0.339px;">Sat</span>
<span class="t " style="top:271px;left:456.5px;letter-spacing:0.094px;">15/09/2018</span>
<span class="t " style="top:271px;left:526.5px;letter-spacing:0.044px;">08:00</span>
<span class="t " style="top:271px;left:566.5px;letter-spacing:-0.339px;">Sat</span>
<span class="t " style="top:271px;left:601.5px;letter-spacing:0.094px;">15/09/2018</span>
<span class="t " style="top:271px;left:671.5px;letter-spacing:-0.056px;">17:45</span>
<span class="t " style="top:271px;left:431px;width:300px;text-align:right;">1</span>
<span class="t " style="top:271px;left:736.5px;letter-spacing:-0.225px;">On Air…</span>
<span class="t " style="top:271px;left:786.5px;letter-spacing:-0.225px;">On Air…</span>
<span class="t " style="top:271px;left:586px;width:300px;text-align:right;letter-spacing:0.094px;">44.79</span>
<span class="t " style="top:271px;left:651px;width:300px;text-align:right;letter-spacing:0.094px;">44.79</span>
<span class="t " style="top:271px;left:956.5px;letter-spacing:-0.438px;">Alamo</span>
<span class="t " style="top:271px;left:1031.5px;letter-spacing:-0.208px;">yes</span>
<span class="t " style="top:271px;left:1056.5px;letter-spacing:-0.105px;">auto</span>
<span class="t " style="top:286px;left:1.5px;letter-spacing:-0.076px;">Toyota Corolla Or si…</span>
<span class="t " style="top:286px;left:-159px;width:300px;text-align:right;">5</span>
<span class="t " style="top:286px;left:146.5px;letter-spacing:-0.171px;">Intermediate - Gold - Plus Excess Ref…</span>
<span class="t " style="top:286px;left:346.5px;letter-spacing:-0.207px;">Flexible Car…</span>
<span class="t " style="top:286px;left:421.5px;letter-spacing:-0.339px;">Sat</span>
<span class="t " style="top:286px;left:456.5px;letter-spacing:0.094px;">15/09/2018</span>
<span class="t " style="top:286px;left:526.5px;letter-spacing:0.044px;">08:00</span>
<span class="t " style="top:286px;left:566.5px;letter-spacing:-0.339px;">Sat</span>
<span class="t " style="top:286px;left:601.5px;letter-spacing:0.094px;">15/09/2018</span>
<span class="t " style="top:286px;left:671.5px;letter-spacing:-0.056px;">17:45</span>
<span class="t " style="top:286px;left:431px;width:300px;text-align:right;">1</span>
<span class="t " style="top:286px;left:736.5px;letter-spacing:-0.225px;">On Air…</span>
<span class="t " style="top:286px;left:786.5px;letter-spacing:-0.225px;">On Air…</span>
<span class="t " style="top:286px;left:586px;width:300px;text-align:right;letter-spacing:0.094px;">44.79</span>
<span class="t " style="top:286px;left:651px;width:300px;text-align:right;letter-spacing:0.094px;">44.79</span>
<span class="t " style="top:286px;left:956.5px;letter-spacing:-0.438px;">Alamo</span>
<span class="t " style="top:286px;left:1031.5px;letter-spacing:-0.208px;">yes</span>
<span class="t " style="top:286px;left:1056.5px;letter-spacing:-0.105px;">auto</span>
<span class="t " style="top:301px;left:1.5px;letter-spacing:-0.076px;">Toyota Corolla Or si…</span>
<span class="t " style="top:301px;left:-159px;width:300px;text-align:right;">5</span>
<span class="t " style="top:301px;left:146.5px;letter-spacing:-0.146px;">Car(Intermediate) - Inclusive GPS</span>
<span class="t " style="top:301px;left:346.5px;letter-spacing:-0.207px;">Flexible Car…</span>
<span class="t " style="top:301px;left:421.5px;letter-spacing:-0.339px;">Sat</span>
<span class="t " style="top:301px;left:456.5px;letter-spacing:0.094px;">15/09/2018</span>
<span class="t " style="top:301px;left:526.5px;letter-spacing:0.044px;">08:00</span>
<span class="t " style="top:301px;left:566.5px;letter-spacing:-0.339px;">Sat</span>
<span class="t " style="top:301px;left:601.5px;letter-spacing:0.094px;">15/09/2018</span>
<span class="t " style="top:301px;left:671.5px;letter-spacing:-0.056px;">17:45</span>
<span class="t " style="top:301px;left:431px;width:300px;text-align:right;">1</span>
<span class="t " style="top:301px;left:736.5px;letter-spacing:-0.225px;">On Air…</span>
<span class="t " style="top:301px;left:786.5px;letter-spacing:-0.225px;">On Air…</span>
<span class="t " style="top:301px;left:586px;width:300px;text-align:right;letter-spacing:0.094px;">45.68</span>
<span class="t " style="top:301px;left:651px;width:300px;text-align:right;letter-spacing:0.094px;">45.68</span>
<span class="t " style="top:301px;left:956.5px;letter-spacing:-0.438px;">Alamo</span>
<span class="t " style="top:301px;left:1031.5px;letter-spacing:-0.208px;">yes</span>
<span class="t " style="top:301px;left:1056.5px;letter-spacing:-0.105px;">auto</span>
<span class="t " style="top:316px;left:1.5px;letter-spacing:-0.076px;">Toyota Corolla Or si…</span>
<span class="t " style="top:316px;left:-159px;width:300px;text-align:right;">5</span>
<span class="t " style="top:316px;left:146.5px;letter-spacing:-0.170px;">Intermediate - Inclusive GPS</span>
<span class="t " style="top:316px;left:346.5px;letter-spacing:-0.207px;">Flexible Car…</span>
<span class="t " style="top:316px;left:421.5px;letter-spacing:-0.339px;">Sat</span>
<span class="t " style="top:316px;left:456.5px;letter-spacing:0.094px;">15/09/2018</span>
<span class="t " style="top:316px;left:526.5px;letter-spacing:0.044px;">08:00</span>
<span class="t " style="top:316px;left:566.5px;letter-spacing:-0.339px;">Sat</span>
<span class="t " style="top:316px;left:601.5px;letter-spacing:0.094px;">15/09/2018</span>
<span class="t " style="top:316px;left:671.5px;letter-spacing:-0.056px;">17:45</span>
<span class="t " style="top:316px;left:431px;width:300px;text-align:right;">1</span>
<span class="t " style="top:316px;left:736.5px;letter-spacing:-0.225px;">On Air…</span>
<span class="t " style="top:316px;left:786.5px;letter-spacing:-0.225px;">On Air…</span>
<span class="t " style="top:316px;left:586px;width:300px;text-align:right;letter-spacing:0.094px;">45.68</span>
<span class="t " style="top:316px;left:651px;width:300px;text-align:right;letter-spacing:0.094px;">45.68</span>
<span class="t " style="top:316px;left:956.5px;letter-spacing:-0.438px;">Alamo</span>
<span class="t " style="top:316px;left:1031.5px;letter-spacing:-0.208px;">yes</span>
<span class="t " style="top:316px;left:1056.5px;letter-spacing:-0.105px;">auto</span>
<span class="t " style="top:331px;left:1.5px;letter-spacing:-0.076px;">Toyota Corolla Or si…</span>
<span class="t " style="top:331px;left:-159px;width:300px;text-align:right;">5</span>
<span class="t " style="top:331px;left:146.5px;letter-spacing:-0.146px;">Car(Intermediate) - Inclusive GPS</span>
<span class="t " style="top:331px;left:346.5px;letter-spacing:-0.207px;">Flexible Car…</span>
<span class="t " style="top:331px;left:421.5px;letter-spacing:-0.339px;">Sat</span>
<span class="t " style="top:331px;left:456.5px;letter-spacing:0.094px;">15/09/2018</span>
<span class="t " style="top:331px;left:526.5px;letter-spacing:0.044px;">08:00</span>
<span class="t " style="top:331px;left:566.5px;letter-spacing:-0.339px;">Sat</span>
<span class="t " style="top:331px;left:601.5px;letter-spacing:0.094px;">15/09/2018</span>
<span class="t " style="top:331px;left:671.5px;letter-spacing:-0.056px;">17:45</span>
<span class="t " style="top:331px;left:431px;width:300px;text-align:right;">1</span>
<span class="t " style="top:331px;left:736.5px;letter-spacing:-0.225px;">On Air…</span>
<span class="t " style="top:331px;left:786.5px;letter-spacing:-0.225px;">On Air…</span>
<span class="t " style="top:331px;left:586px;width:300px;text-align:right;letter-spacing:0.094px;">45.68</span>
<span class="t " style="top:331px;left:651px;width:300px;text-align:right;letter-spacing:0.094px;">45.68</span>
<span class="t " style="top:331px;left:956.5px;letter-spacing:-0.438px;">Alamo</span>
<span class="t " style="top:331px;left:1031.5px;letter-spacing:-0.208px;">yes</span>
<span class="t " style="top:331px;left:1056.5px;letter-spacing:-0.105px;">auto</span>
<span class="t " style="top:346px;left:1.5px;letter-spacing:-0.076px;">Toyota Corolla Or si…</span>
<span class="t " style="top:346px;left:-159px;width:300px;text-align:right;">5</span>
<span class="t " style="top:346px;left:146.5px;letter-spacing:-0.170px;">Intermediate - Inclusive GPS</span>
<span class="t " style="top:346px;left:346.5px;letter-spacing:-0.207px;">Flexible Car…</span>
<span class="t " style="top:346px;left:421.5px;letter-spacing:-0.339px;">Sat</span>
<span class="t " style="top:346px;left:456.5px;letter-spacing:0.094px;">15/09/2018</span>
<span class="t " style="top:346px;left:526.5px;letter-spacing:0.044px;">08:00</span>
<span class="t " style="top:346px;left:566.5px;letter-spacing:-0.339px;">Sat</span>
<span class="t " style="top:346px;left:601.5px;letter-spacing:0.094px;">15/09/2018</span>
<span class="t " style="top:346px;left:671.5px;letter-spacing:-0.056px;">17:45</span>
<span class="t " style="top:346px;left:431px;width:300px;text-align:right;">1</span>
<span class="t " style="top:346px;left:736.5px;letter-spacing:-0.225px;">On Air…</span>
<span class="t " style="top:346px;left:786.5px;letter-spacing:-0.225px;">On Air…</span>
<span class="t " style="top:346px;left:586px;width:300px;text-align:right;letter-spacing:0.094px;">45.68</span>
<span class="t " style="top:346px;left:651px;width:300px;text-align:right;letter-spacing:0.094px;">45.68</span>
<span class="t " style="top:346px;left:956.5px;letter-spacing:-0.438px;">Alamo</span>
<span class="t " style="top:346px;left:1031.5px;letter-spacing:-0.208px;">yes</span>
<span class="t " style="top:346px;left:1056.5px;letter-spacing:-0.105px;">auto</span>
<span class="t " style="top:361px;left:1.5px;letter-spacing:-0.328px;">Ford Escape Or simila…</span>
<span class="t " style="top:361px;left:-159px;width:300px;text-align:right;">5</span>
<span class="t " style="top:361px;left:146.5px;letter-spacing:-0.192px;">SUV(Intermediate) - Gold</span>
<span class="t " style="top:361px;left:346.5px;letter-spacing:-0.207px;">Flexible Car…</span>
<span class="t " style="top:361px;left:421.5px;letter-spacing:-0.339px;">Sat</span>
<span class="t " style="top:361px;left:456.5px;letter-spacing:0.094px;">15/09/2018</span>
<span class="t " style="top:361px;left:526.5px;letter-spacing:0.044px;">08:00</span>
<span class="t " style="top:361px;left:566.5px;letter-spacing:-0.339px;">Sat</span>
<span class="t " style="top:361px;left:601.5px;letter-spacing:0.094px;">15/09/2018</span>
<span class="t " style="top:361px;left:671.5px;letter-spacing:-0.056px;">17:45</span>
<span class="t " style="top:361px;left:431px;width:300px;text-align:right;">1</span>
<span class="t " style="top:361px;left:736.5px;letter-spacing:-0.225px;">On Air…</span>
<span class="t " style="top:361px;left:786.5px;letter-spacing:-0.225px;">On Air…</span>
<span class="t " style="top:361px;left:586px;width:300px;text-align:right;letter-spacing:0.094px;">46.19</span>
<span class="t " style="top:361px;left:651px;width:300px;text-align:right;letter-spacing:0.094px;">46.19</span>
<span class="t " style="top:361px;left:956.5px;letter-spacing:-0.438px;">Alamo</span>
<span class="t " style="top:361px;left:1031.5px;letter-spacing:-0.208px;">yes</span>
<span class="t " style="top:361px;left:1056.5px;letter-spacing:-0.105px;">auto</span>
</div>
<div class="" style="left:1574px;top:372px;width:6px;height:384px;background:repeating-conic-gradient(#fff 0% 25%,#d6d3ce 0% 50%) 0 0/2px 2px"></div>
<div class="rais2" style="left:1574px;top:372px;width:20px;height:16px;"></div>
<div class="rais2" style="left:1574px;top:740px;width:20px;height:16px;"></div>
<div class="rais2" style="left:1574px;top:388px;width:20px;height:237px;"></div>
<div class="" style="left:1577px;top:381px;width:1px;height:1px;background:#000"></div>
<div class="" style="left:1577px;top:746px;width:1px;height:1px;background:#000"></div>
<span class="t " style="top:783px;left:222px;letter-spacing:0.004px;">First portion: 10.0 sec, total search time: 10.1 sec</span>
<div class="rais2" style="left:1560px;top:778px;width:22px;height:22px;"></div>
<span class="t " style="top:785px;left:1569px;font:bold 17px/17px Liberation Serif,serif;height:17px;color:#003c9c;margin-top:-4px">i</span>
<div class="" style="left:215px;top:805px;width:1365px;height:1px;background:#848284"></div>
<div class="" style="left:216px;top:806px;width:52px;height:17px;background:#d6d3ce;border-right:1px solid #848284"></div>
<span class="t " style="top:808px;left:218.5px;letter-spacing:-0.509px;">Summary</span>
<div class="" style="left:268px;top:806px;width:41px;height:17px;background:#d6d3ce;border-right:1px solid #848284"></div>
<span class="t " style="top:808px;left:270.5px;letter-spacing:0.008px;">Search</span>
<div class="" style="left:309px;top:806px;width:108px;height:17px;background:#c6ffc6;border-right:1px solid #848284"></div>
<span class="t " style="top:808px;left:311.5px;letter-spacing:-0.484px;">Flt 2A LON MCO LON</span>
<div class="" style="left:417px;top:806px;width:67px;height:17px;background:#c6ffc6;border-right:1px solid #848284"></div>
<span class="t " style="top:808px;left:419.5px;letter-spacing:-0.447px;">Acc 4A MCO</span>
<div class="" style="left:484px;top:805px;width:49px;height:19px;background:#148a14;border-radius:0 0 3px 3px"></div>
<span class="t w" style="top:808px;left:486px;letter-spacing:-0.493px;">Car MCO</span>
<div class="" style="left:533px;top:806px;width:113px;height:17px;background:#c6ffc6;border-right:1px solid #848284"></div>
<span class="t " style="top:808px;left:537.5px;letter-spacing:-0.464px;">Flt 4A MAN MCO MAN</span>
<div class="" style="left:646px;top:806px;width:96px;height:17px;background:#d6d3ce;border-right:1px solid #848284"></div>
<span class="t " style="top:808px;left:649px;letter-spacing:-0.391px;">Financial Summary</span>
<span class="t " style="top:832px;left:760px;letter-spacing:-0.130px;">User: 415 - Hema Yoganathan</span>
<span class="t " style="top:832px;left:916px;letter-spacing:-0.117px;">Retailer: &#x27;Ocean-Florida&#x27;</span>
<span class="t " style="top:832px;left:1042px;letter-spacing:-0.102px;">Client: none</span>
<span class="t " style="top:832px;left:1540px;">17:46 GMT</span>
<div class="" style="left:0px;top:858px;width:1578px;height:1px;background:#424142"></div>
<div class="" style="left:0px;top:859px;width:1578px;height:1px;background:#848284"></div>
<div class="rais2" style="left:2px;top:860px;width:52px;height:38px;"></div>
<div class="ic" style="left:4px;top:871px"><svg width="16" height="14" viewBox="0 0 16 14"><path d="M2.600 1.800C4.500.3 6.300.6 7.800 1.600L6.400 6.300C4.900 5.400 3.200 5.100 1.200 6.400z" fill="#f05820"/><path d="M3.200 2.200c1.500-1 2.800-.8 3.800-.2l-.5 1.800c-1.200-.6-2.400-.7-3.800.1z" fill="#f8a040"/><path d="M8.600 2c1.800 1 3.800 1 5.900-.4L13 6.300c-2 1.400-3.900 1.500-5.800.4z" fill="#68b838"/><path d="M9 2.700c1.500.7 3 .7 4.600-.1l-.5 1.500c-1.500.8-3 .8-4.500.2z" fill="#98d860"/><path d="M1 7.300c2-1.300 3.700-1 5.200-.1L4.800 12c-1.500-.9-3.200-1.200-5.200.1z" fill="#2888e0"/><path d="M1.400 8c1.500-.9 2.800-.8 4-.2l-.5 1.600c-1.200-.6-2.500-.7-3.900.1z" fill="#78c0f8"/><path d="M6.900 7.600c1.900 1.100 3.800 1 5.900-.4l-1.400 4.700c-2.100 1.400-4 1.500-5.900.4z" fill="#f8c018"/><path d="M7.300 8.400c1.500.7 3 .7 4.600-.1l-.4 1.400c-1.500.8-3 .8-4.600.2z" fill="#ffe070"/></svg></div>
<span class="t b" style="top:873px;left:20px;letter-spacing:0.516px;">Start</span>
<div class="" style="left:63px;top:860px;width:159px;height:38px;border:1px solid;border-color:#424142 #fff #fff #424142;box-shadow:inset 1px 1px 0 #848284;background:#fff"></div>
<div class="ic" style="left:69px;top:869px"><svg width="29" height="21" viewBox="0 0 29 21"><defs><radialGradient id="gb" gradientUnits="userSpaceOnUse" cx="8" cy="4" r="20"><stop offset="0" stop-color="#fff080"/><stop offset=".22" stop-color="#ffd030"/><stop offset=".5" stop-color="#f09818"/><stop offset=".78" stop-color="#d05c0c"/><stop offset="1" stop-color="#b84008"/></radialGradient></defs><path d="M.3 8C.5 4 3 .5 8 .3c4-.1 7 1.200 9 2.500l3.500.3 8 1.700-.3 2.700L24 13l-9 7.500L4.500 13z" fill="url(#gb)"/><path d="M19 3.500l9.500 1.300-.3 2.700L24 13l-9 7.500z" fill="#b03c04" fill-opacity=".35"/></svg></div>
<span class="t b" style="top:873px;left:103px;letter-spacing:0.222px;">Interactive - Ocea...</span>
<div class="" style="left:1408px;top:860px;width:172px;height:38px;border:1px solid;border-color:#848284 #fff #fff #848284"></div>
<div class="ic" style="left:1415px;top:871px"><svg width="16" height="16" viewBox="0 0 16 16"><path d="M1 1l1 .8 1-.8 1 .8 1-.8 1 .8L7 1l1.500 7.500H.5z" fill="#f89820"/><path d="M1 1l6 0 1.500 7.500-3-1z" fill="#f86818" fill-opacity=".5"/><path d="M6.500 1.500L15.500 1l-.6 1 .6 1-.6 1 .6 1-.6 1L8 8.500z" fill="#0890d0"/><path d="M7 2l8-.5-2 3z" fill="#0868a8"/><path d="M.5 8.500H8L8.500 15 .8 15l.5-1-.6-1 .6-1-.6-1 .6-1z" fill="#309848"/><path d="M.8 9h7l.3 3z" fill="#58b858" fill-opacity=".7"/><path d="M8 8.500l7-1.800-.5 9.300-1-.8-1 .8-1-.8-1 .8-1-.8-1 .8z" fill="#d82818"/><path d="M11 7.800l4-1-.3 5z" fill="#f07018"/></svg></div>
<div class="ic" style="left:1439px;top:873px"><svg width="17" height="12" viewBox="0 0 17 12"><rect x=".6" y="1.600" width="12.800" height="6.800" fill="#38c030" stroke="#0c7810" stroke-width="1.100"/><path d="M1.500 2.500h9l-5 5h-4z" fill="#a0f078" fill-opacity=".8"/><circle cx="11" cy="3.500" r="1.100" fill="#000"/><path d="M4.500 8.500v1.300M6.200 8.500v1.300M7.900 8.500v1.300M9.600 8.500v1.300" stroke="#e8d810" stroke-width="1.100"/><path d="M14.200.5v9.500M14.200 1h2.500M14.200 5.300h1.800" stroke="#000" stroke-width="1.300" fill="none"/></svg></div>
<div class="ic" style="left:1463px;top:871px"><svg width="17" height="17" viewBox="0 0 17 17"><rect x="5.500" y="2.500" width="10.500" height="10" fill="#b4b4b8" stroke="#f8f8f8" stroke-width="1.400"/><rect x="4.600" y="1.600" width="12.300" height="11.800" fill="none" stroke="#9c9ca0" stroke-width=".5"/><path d="M7 6l6-2.500" stroke="#c8c8cc" stroke-width="2.500"/><path d="M6 15.500h9" stroke="#f8f8f8" stroke-width="1.800"/><path d="M5.500 16.600h10" stroke="#8c8c90" stroke-width=".5"/><path d="M10 13.500v1.500" stroke="#d8d8d8" stroke-width="2.500"/><path d="M1.300.8v4.500c0 1.500 4.400 1.500 4.400 0V.8M3.500 6.500V16h2.200" stroke="#6c6c70" stroke-width="2.300" fill="none"/><path d="M1.300.8v4.500c0 1.500 4.400 1.500 4.400 0V.8M3.500 6.500V16h2.200" stroke="#fff" stroke-width="1.200" fill="none"/><path d="M3.500.5v3.500" stroke="#6c6c70" stroke-width=".8"/></svg></div>
<div class="ic" style="left:1487px;top:872px"><svg width="17" height="16" viewBox="0 0 17 16"><path d="M.8 4.500h2.400L7.500.8v13.400L3.200 10.500H.8z" fill="#fff" stroke="#9c9ca0" stroke-width=".9"/><path d="M3.200 4.500v6" stroke="#c0c0c4" stroke-width=".7"/><circle cx="12" cy="10.800" r="4.500" fill="#e81818"/><circle cx="12" cy="10.800" r="4.500" fill="none" stroke="#f86060" stroke-width=".8" stroke-dasharray="1.500 1"/><path d="M9.800 8.600l4.400 4.400M14.200 8.600l-4.400 4.400" stroke="#fff" stroke-width="1.700"/></svg></div>
<span class="t " style="top:865px;left:1531px;letter-spacing:-0.206px;">17:46</span>
<span class="t " style="top:881px;left:1516.5px;letter-spacing:0.064px;">08/05/2017</span>
</div></body></html>
